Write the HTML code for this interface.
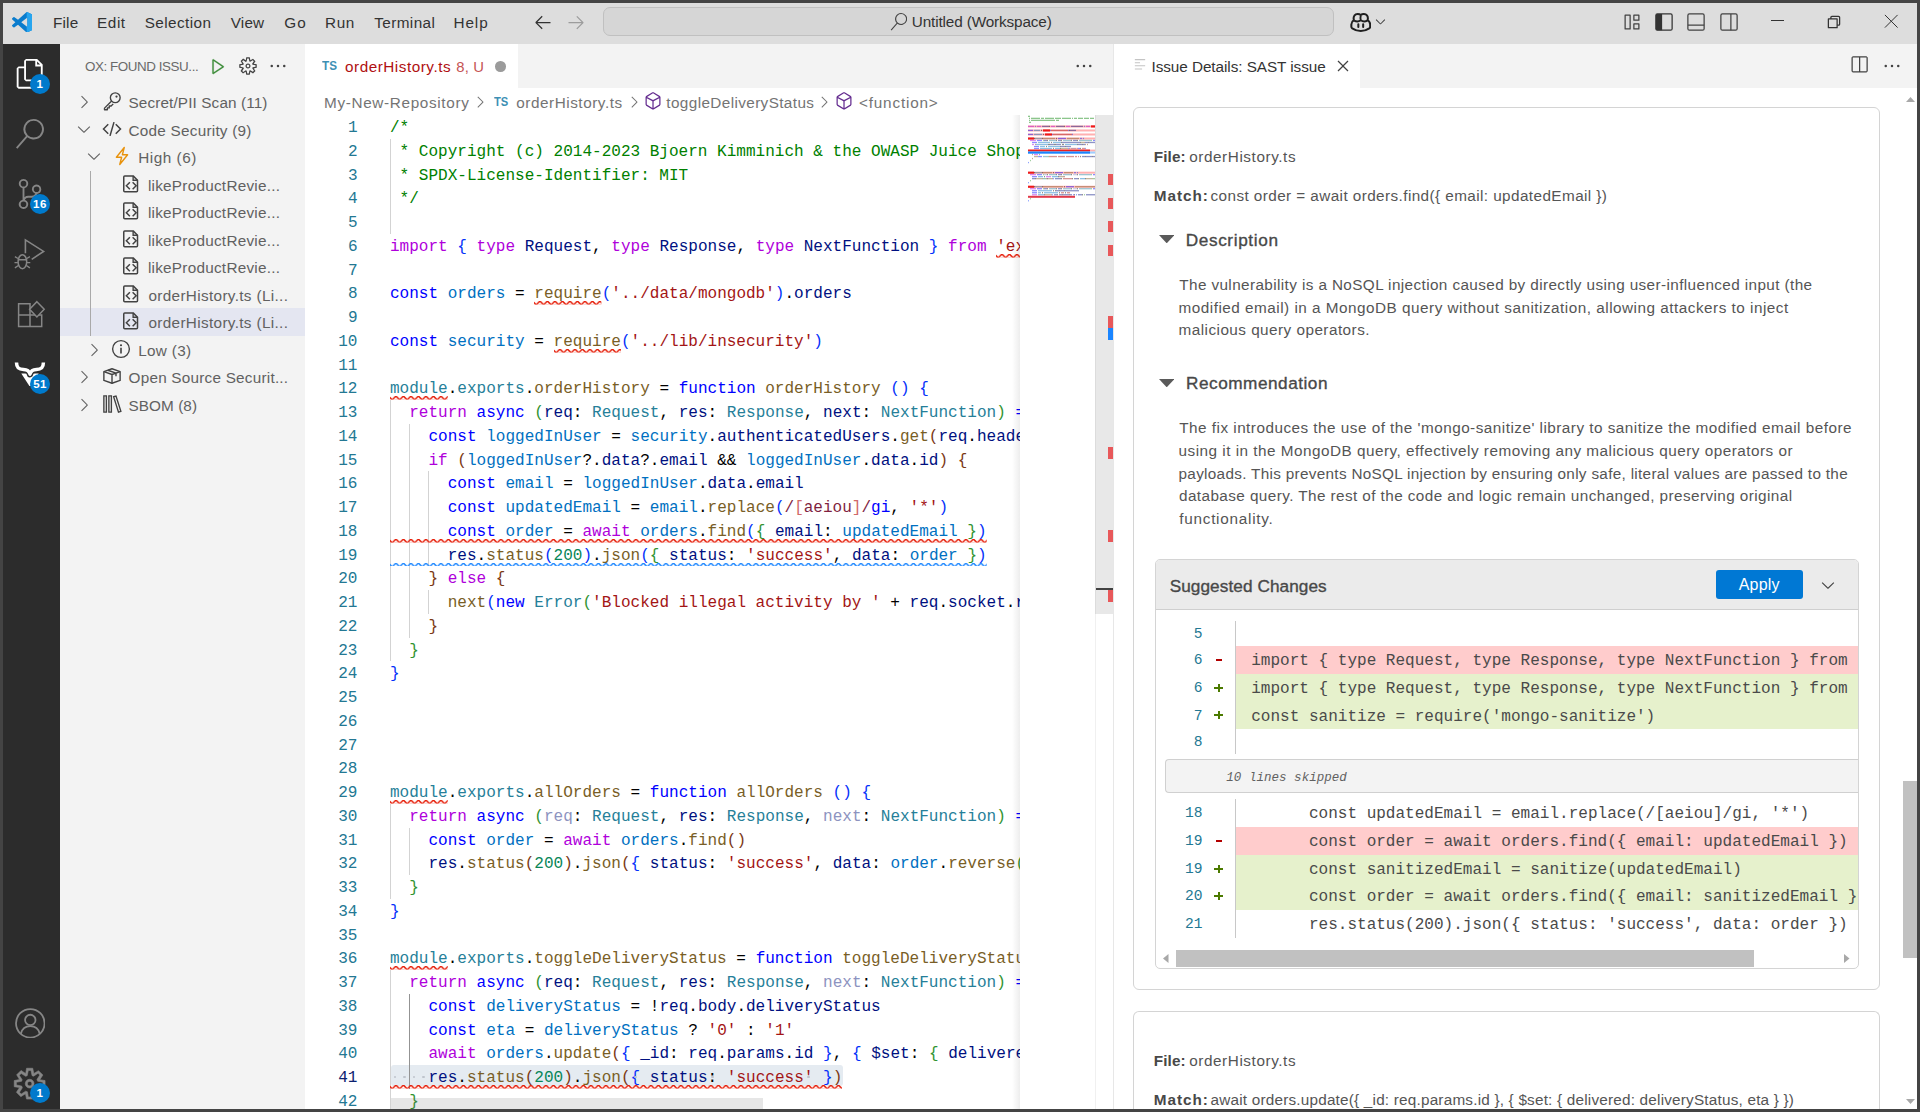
<!DOCTYPE html>
<html><head><meta charset="utf-8"><title>VS Code</title>
<style>
html,body{margin:0;padding:0;overflow:hidden}
html{width:1920px;height:1112px}
body{width:1920px;height:1112px;position:relative;overflow:hidden;background:#fff;font-family:"Liberation Sans",sans-serif}
.a{position:absolute;box-sizing:border-box}
.t{position:absolute;white-space:pre;line-height:1}
.ls{font-family:"Liberation Sans",sans-serif}
.lm{font-family:"Liberation Mono",monospace}
i{font-style:normal}
#code{position:absolute;left:305px;top:115px;width:715px;height:994px;overflow:hidden}
.cl{position:absolute;left:85px;height:23.75px;line-height:23.75px;white-space:pre;font-family:"Liberation Mono",monospace;font-size:16.04px;color:#000}
.cl i{position:relative}
.ln{position:absolute;left:0;width:52.5px;text-align:right;height:23.75px;line-height:23.75px;font-family:"Liberation Mono",monospace;font-size:16.04px;color:#237893}
.dl{position:absolute;white-space:pre;font-family:"Liberation Mono",monospace;font-size:16.04px;color:#3b3b3b;height:27.5px;line-height:27.5px}
.dn{position:absolute;text-align:right;font-family:"Liberation Mono",monospace;font-size:12.6px;color:#237893;height:27.5px;line-height:27.5px}
i.m{color:#008000}i.k{color:#0000ff}i.kc{color:#af00db}i.c{color:#0070c1}i.v{color:#001080}i.f{color:#795e26}i.t{color:#267f99}i.s{color:#a31515}i.n{color:#098658}i.b1{color:#0431fa}i.b2{color:#319331}i.b3{color:#7b3814}i.r{color:#811f3f}i.rc{color:#d16969}i.u{color:#8d93bf}
</style></head>
<body>
<div class="a" style="left:0.00px;top:0.00px;width:1920.00px;height:43.75px;background:#dddddd;"></div>
<svg class="a" style="left:11.70px;top:11.70px;" width="20.50" height="20.50" viewBox="0 0 24 24"><defs><clipPath id="vr"><rect x="17.2" y="0" width="7" height="24"/></clipPath></defs><path d="M23.15 2.587L18.21.21a1.494 1.494 0 0 0-1.705.29l-9.46 8.63-4.12-3.128a.999.999 0 0 0-1.276.057L.327 7.261A1 1 0 0 0 .326 8.74L3.899 12 .326 15.26a1 1 0 0 0 .001 1.479L1.65 17.94a.999.999 0 0 0 1.276.057l4.12-3.128 9.46 8.63a1.492 1.492 0 0 0 1.704.29l4.942-2.377A1.5 1.5 0 0 0 24 20.06V3.939a1.5 1.5 0 0 0-.85-1.352zm-5.146 14.861L10.826 12l7.178-5.448v10.896z" fill="#0a7ccd" /><g clip-path="url(#vr)"><path d="M23.15 2.587L18.21.21a1.494 1.494 0 0 0-1.705.29l-9.46 8.63-4.12-3.128a.999.999 0 0 0-1.276.057L.327 7.261A1 1 0 0 0 .326 8.74L3.899 12 .326 15.26a1 1 0 0 0 .001 1.479L1.65 17.94a.999.999 0 0 0 1.276.057l4.12-3.128 9.46 8.63a1.492 1.492 0 0 0 1.704.29l4.942-2.377A1.5 1.5 0 0 0 24 20.06V3.939a1.5 1.5 0 0 0-.85-1.352zm-5.146 14.861L10.826 12l7.178-5.448v10.896z" fill="#27a5ef" /></g></svg>
<span class="t ls" style="left:52.95px;top:15.15px;font-size:15.30px;color:#333333;letter-spacing:0.183px;">File</span>
<span class="t ls" style="left:97.05px;top:15.15px;font-size:15.30px;color:#333333;letter-spacing:0.567px;">Edit</span>
<span class="t ls" style="left:144.75px;top:15.15px;font-size:15.30px;color:#333333;letter-spacing:0.406px;">Selection</span>
<span class="t ls" style="left:230.80px;top:15.15px;font-size:15.30px;color:#333333;letter-spacing:0.150px;">View</span>
<span class="t ls" style="left:284.25px;top:15.15px;font-size:15.30px;color:#333333;letter-spacing:1.000px;">Go</span>
<span class="t ls" style="left:325.05px;top:15.15px;font-size:15.30px;color:#333333;letter-spacing:0.625px;">Run</span>
<span class="t ls" style="left:374.25px;top:15.15px;font-size:15.30px;color:#333333;letter-spacing:0.400px;">Terminal</span>
<span class="t ls" style="left:453.45px;top:15.15px;font-size:15.30px;color:#333333;letter-spacing:0.933px;">Help</span>
<svg class="a" style="left:533.00px;top:11.70px;" width="20.00" height="20.00" viewBox="0 0 16 16"><path d="M7 3.093l-5 5V8.8l5 5 .707-.707-4.146-4.147H14v-1H3.56L7.708 3.8 7 3.093z" fill="#333333" /></svg>
<svg class="a" style="left:565.50px;top:11.70px;" width="20.00" height="20.00" viewBox="0 0 16 16"><path d="M9 13.887l5-5V8.18l-5-5-.707.707 4.146 4.147H2v1h10.44L8.292 13.18l.707.707z" fill="#9c9c9c" /></svg>
<div class="a" style="left:602.50px;top:7.00px;width:731.50px;height:29.40px;background:#d6d6d6;border:1px solid #c0c0c0;border-radius:7px;"></div>
<svg class="a" style="left:889.50px;top:13.00px;" width="17.50" height="17.50" viewBox="0 0 24 24"><path d="M15.25 0a8.25 8.25 0 0 0-6.18 13.72L1 22.88l1.12 1 8.05-9.12A8.251 8.251 0 1 0 15.25.01V0zm0 15a6.75 6.75 0 1 1 0-13.5 6.75 6.75 0 0 1 0 13.5z" fill="#444444" /></svg>
<span class="t ls" style="left:911.75px;top:14.15px;font-size:15.30px;color:#333333;letter-spacing:-0.129px;">Untitled (Workspace)</span>
<svg class="a" style="left:1349.50px;top:11.50px;" width="21.50" height="21.50" viewBox="0 0 16 16"><path d="M8 2.2c-1.2-.9-3.6-.9-4.6.3-.8 1-.8 2.500-.500 3.600C1.800 6.800 1 7.900 1 9.300v1.700c0 .5.300.900.700 1.200C3.500 13.400 5.700 14.200 8 14.200s4.500-.8 6.300-2c.4-.3.700-.7.700-1.200V9.300c0-1.400-.8-2.500-1.900-3.200.3-1.100.3-2.600-.5-3.600-1-1.200-3.400-1.200-4.600-.3z" fill="none" stroke="#1f1f1f" stroke-width="1.500" stroke-linejoin="round"/><path d="M8 2.600c-.3 1.300-.3 2.700 0 3.600M3.100 6.400c1.500.8 3.700.6 4.900-.2 1.200.8 3.400 1 4.900.2" fill="none" stroke="#1f1f1f" stroke-width="1.400"/><path d="M6.200 9.200v2M9.800 9.200v2" stroke="#1f1f1f" stroke-width="1.500" stroke-linecap="round"/></svg>
<svg class="a" style="left:1373.00px;top:14.00px;" width="15.00" height="15.00" viewBox="0 0 16 16"><path d="M7.976 10.072l4.357-4.357.62.618L8.284 11h-.618L3 6.333l.619-.618 4.357 4.357z" fill="#333333" /></svg>
<svg class="a" style="left:1621.50px;top:12.00px;" width="20.00" height="20.00" viewBox="0 0 16 16"><path d="M2.5 2.5h4v11h-4zM9.5 2.5h4v4h-4zM9.5 9.5h4v4h-4z" fill="none" stroke="#424242" stroke-width="1" stroke-linejoin="round"/></svg>
<svg class="a" style="left:1653.70px;top:12.00px;" width="20.00" height="20.00" viewBox="0 0 16 16"><rect x="1.5" y="1.5" width="13" height="13" rx="1.2" fill="none" stroke="#333333"/><path d="M1.5 2.5a1 1 0 0 1 1-1H6.5v13H2.5a1 1 0 0 1-1-1z" fill="#333333"/></svg>
<svg class="a" style="left:1686.30px;top:12.00px;" width="20.00" height="20.00" viewBox="0 0 16 16"><rect x="1.5" y="1.5" width="13" height="13" rx="1.2" fill="none" stroke="#424242"/><path d="M1.5 10.5h13" fill="none" stroke="#424242" stroke-width="1" /></svg>
<svg class="a" style="left:1718.70px;top:12.00px;" width="20.00" height="20.00" viewBox="0 0 16 16"><rect x="1.5" y="1.5" width="13" height="13" rx="1.2" fill="none" stroke="#424242"/><path d="M9.5 1.5v13" fill="none" stroke="#424242" stroke-width="1" /></svg>
<div class="a" style="left:1771.00px;top:20.00px;width:13.00px;height:1.20px;background:#333333;"></div>
<svg class="a" style="left:1823.50px;top:11.50px;" width="20.00" height="20.00" viewBox="0 0 16 16"><path d="M3.5 5.500h7v7h-7z" fill="none" stroke="#333333" stroke-width="1" stroke-linejoin="round"/><path d="M5.500 5.500v-1.200a.8.8 0 0 1 .8-.8h5.400a.8.8 0 0 1 .8.8v5.400a.8.8 0 0 1-.8.8h-1.200" fill="none" stroke="#333333" stroke-width="1" /></svg>
<svg class="a" style="left:1884.30px;top:14.00px;" width="14.50" height="14.50" viewBox="0 0 16 16"><path d="M1 1l14 14M15 1L1 15" fill="none" stroke="#333333" stroke-width="1.1" /></svg>
<div class="a" style="left:0.00px;top:43.75px;width:60.00px;height:1068.25px;background:#2c2c2c;"></div>
<svg class="a" style="left:15.80px;top:58.90px;" width="27.40" height="29.70" viewBox="1 0 21 24"><path d="M17.5 0h-9L7 1.5V6H2.5L1 7.5v15.07L2.5 24h12.07L16 22.57V18h4.7l1.3-1.43V4.5L17.5 0zm0 2.12l2.38 2.38H17.5V2.12zm-3 20.38h-12v-15H7v9.07L8.5 18h6v4.5zm6-6h-12v-15H16V6h4.5v10.5z" fill="#ffffff" /></svg>
<svg class="a" style="left:16.20px;top:119.00px;" width="28.20" height="29.80" viewBox="1 0 22.7 24"><path d="M15.25 0a8.25 8.25 0 0 0-6.18 13.72L1 22.88l1.12 1 8.05-9.12A8.251 8.251 0 1 0 15.25.01V0zm0 15a6.75 6.75 0 1 1 0-13.5 6.75 6.75 0 0 1 0 13.5z" fill="#868686" /></svg>
<svg class="a" style="left:16.50px;top:179.00px;" width="25.50" height="30.00" viewBox="2.5 0 18.6 24"><path d="M21.007 8.222A3.738 3.738 0 0 0 15.045 5.2a3.737 3.737 0 0 0 1.156 6.583 2.988 2.988 0 0 1-2.668 1.67h-2.99a4.456 4.456 0 0 0-2.989 1.165V7.4a3.737 3.737 0 1 0-1.494 0v9.117a3.776 3.776 0 1 0 1.816.099 2.99 2.99 0 0 1 2.668-1.667h2.99a4.484 4.484 0 0 0 4.223-3.039 3.736 3.736 0 0 0 3.25-3.687zM4.565 3.738a2.242 2.242 0 1 1 4.484 0 2.242 2.242 0 0 1-4.484 0zm4.484 16.441a2.242 2.242 0 1 1-4.484 0 2.242 2.242 0 0 1 4.484 0zm8.221-9.715a2.242 2.242 0 1 1 0-4.485 2.242 2.242 0 0 1 0 4.485z" fill="#868686" /></svg>
<svg class="a" style="left:10.00px;top:235.00px;" width="40.00" height="40.00" viewBox="10 235 40 40"><path d="M25.400 253.200V239.900L43.600 251.400L31.700 259.300" fill="none" stroke="#868686" stroke-width="1.6" stroke-linejoin="miter"/><ellipse cx="22.400" cy="261.700" rx="4.300" ry="7" fill="none" stroke="#868686" stroke-width="1.500"/><path d="M18.300 259.700H26.500M14.900 256.700L18 258.500M14.500 262.600H17.900M14.900 267.800L18.400 265.500M29.900 256.700L26.800 258.500M30.300 262.600H26.900M29.900 267.800L26.400 265.500" fill="none" stroke="#868686" stroke-width="1.4" /></svg>
<svg class="a" style="left:10.00px;top:295.00px;" width="40.00" height="40.00" viewBox="10 295 40 40"><path d="M18.600 303.700h11.400v11.400h-11.400zM18.600 315.100h11.400v11.400h-11.400zM30 315.100h11.700v11.400h-11.700z" fill="none" stroke="#868686" stroke-width="1.5" /><path d="M36.900 301.700l7.300 7.600-7.300 7.600-7.300-7.600z" fill="#2c2c2c" stroke="#868686" stroke-width="1.500"/></svg>
<svg class="a" style="left:10.00px;top:355.00px;" width="40.00" height="40.00" viewBox="10 355 40 40"><path d="M21.300 373.500H38.700L30.600 386H29.400Z" fill="#ffffff"/><path d="M16.500 362.600C16.500 368 19 369.500 23.500 369.500C27.500 369.500 29.200 370.800 30 374.200C30.800 370.800 32.500 369.500 36.500 369.500C41 369.500 43.400 368 43.400 362.600" fill="none" stroke="#2c2c2c" stroke-width="6.4" stroke-linejoin="round"/><path d="M16.500 362.600C16.500 368 19 369.500 23.500 369.500C27.500 369.500 29.200 370.800 30 374.200C30.800 370.800 32.500 369.500 36.500 369.500C41 369.500 43.400 368 43.400 362.600" fill="none" stroke="#ffffff" stroke-width="3.5" stroke-linejoin="round"/></svg>
<svg class="a" style="left:14.80px;top:1007.80px;" width="30.60" height="30.60" viewBox="0 0 24 24"><circle cx="12" cy="12" r="11.2" fill="none" stroke="#868686" stroke-width="1.4"/><circle cx="12" cy="9.4" r="4.1" fill="none" stroke="#868686" stroke-width="1.4"/><path d="M4.6 20.2c.9-3.6 3.8-5.9 7.4-5.9s6.5 2.3 7.4 5.9" fill="none" stroke="#868686" stroke-width="1.4" /></svg>
<svg class="a" style="left:12.00px;top:1065.60px;" width="35.30" height="35.30" viewBox="0 0 16 16"><path d="M9.1 4.4L8.6 2H7.4l-.5 2.4-.7.3-2-1.3-.9.8 1.3 2-.2.7-2.4.5v1.2l2.4.5.3.8-1.3 2 .8.8 2-1.3.8.3.4 2.3h1.2l.5-2.4.8-.3 2 1.3.8-.8-1.3-2 .3-.8 2.3-.4V7.4l-2.4-.5-.3-.8 1.3-2-.8-.8-2 1.3-.7-.2zM9.4 1l.5 2.4L12 2.1l2 2-1.4 2.1 2.4.4v2.8l-2.4.5L14 12l-2 2-2.1-1.4-.5 2.4H6.6l-.5-2.4L4 13.9l-2-2 1.4-2.1L1 9.4V6.6l2.4-.5L2.1 4l2-2 2.1 1.4.4-2.4h2.8zm.6 7c0 1.1-.9 2-2 2s-2-.9-2-2 .9-2 2-2 2 .9 2 2zM8 9c.6 0 1-.4 1-1s-.4-1-1-1-1 .4-1 1 .4 1 1 1z" fill="#868686" stroke="#868686" stroke-width=".25"/></svg>
<div class="a" style="left:30.00px;top:74.00px;width:20.00px;height:20.00px;background:#007acc;border-radius:10px;"></div>
<span class="t ls" style="left:36.40px;top:78.55px;font-size:11.50px;color:#ffffff;font-weight:bold;letter-spacing:0.450px;">1</span>
<div class="a" style="left:29.80px;top:194.00px;width:20.00px;height:20.00px;background:#007acc;border-radius:10px;"></div>
<span class="t ls" style="left:33.10px;top:198.55px;font-size:11.50px;color:#ffffff;font-weight:bold;letter-spacing:0.400px;">16</span>
<div class="a" style="left:29.80px;top:374.00px;width:20.00px;height:20.00px;background:#007acc;border-radius:10px;"></div>
<span class="t ls" style="left:33.35px;top:378.55px;font-size:11.50px;color:#ffffff;font-weight:bold;letter-spacing:0.150px;">51</span>
<div class="a" style="left:30.00px;top:1082.80px;width:20.00px;height:20.00px;background:#007acc;border-radius:10px;"></div>
<span class="t ls" style="left:36.40px;top:1087.55px;font-size:11.50px;color:#ffffff;font-weight:bold;letter-spacing:0.450px;">1</span>
<div class="a" style="left:60.00px;top:43.75px;width:245.00px;height:1068.25px;background:#f3f3f3;"></div>
<span class="t ls" style="left:84.90px;top:60.10px;font-size:13.40px;color:#6a6a6a;letter-spacing:-0.422px;">OX: FOUND ISSU...</span>
<svg class="a" style="left:209.30px;top:57.00px;" width="18.40" height="18.40" viewBox="0 0 16 16"><path d="M3.78 2L3 2.41v12l.78.42 9-6V8l-9-6zM4 13.48V3.35l7.6 5.07L4 13.48z" fill="#388a34" stroke="#388a34" stroke-width=".3"/></svg>
<svg class="a" style="left:237.50px;top:56.00px;" width="20.00" height="20.00" viewBox="0 0 16 16"><path d="M9.1 4.4L8.6 2H7.4l-.5 2.4-.7.3-2-1.3-.9.8 1.3 2-.2.7-2.4.5v1.2l2.4.5.3.8-1.3 2 .8.8 2-1.3.8.3.4 2.3h1.2l.5-2.4.8-.3 2 1.3.8-.8-1.3-2 .3-.8 2.3-.4V7.4l-2.4-.5-.3-.8 1.3-2-.8-.8-2 1.3-.7-.2zM9.4 1l.5 2.4L12 2.1l2 2-1.4 2.1 2.4.4v2.8l-2.4.5L14 12l-2 2-2.1-1.4-.5 2.4H6.6l-.5-2.4L4 13.9l-2-2 1.4-2.1L1 9.4V6.6l2.4-.5L2.1 4l2-2 2.1 1.4.4-2.4h2.8zm.6 7c0 1.1-.9 2-2 2s-2-.9-2-2 .9-2 2-2 2 .9 2 2zM8 9c.6 0 1-.4 1-1s-.4-1-1-1-1 .4-1 1 .4 1 1 1z" fill="#424242" /></svg>
<svg class="a" style="left:267.50px;top:56.00px;" width="20.00" height="20.00" viewBox="0 0 16 16"><path d="M4 8a1 1 0 1 1-2 0 1 1 0 0 1 2 0zm5 0a1 1 0 1 1-2 0 1 1 0 0 1 2 0zm5 0a1 1 0 1 1-2 0 1 1 0 0 1 2 0z" fill="#424242" /></svg>
<div class="a" style="left:60.00px;top:308.00px;width:245.00px;height:27.50px;background:#e4e6f1;"></div>
<div class="a" style="left:90.00px;top:171.00px;width:1.00px;height:164.50px;background:#a9a9a9;"></div>
<svg class="a" style="left:74.30px;top:92.10px;" width="20.00" height="20.00" viewBox="0 0 16 16"><path d="M10.072 8.024L5.715 3.667l.618-.62L11 7.716v.618L6.333 13l-.618-.619 4.357-4.357z" fill="#646464" /></svg>
<svg class="a" style="left:101.50px;top:91.25px;" width="20.00" height="20.00" viewBox="0 0 16 16"><circle cx="10.600" cy="5.400" r="3.900" fill="none" stroke="#424242" stroke-width="1.100"/><circle cx="11.600" cy="4.400" r=".9" fill="#424242"/><path d="M7.700 8L2 13.700v1.300h2.300v-1.500h1.500v-1.500h1.500l1.700-1.700" fill="none" stroke="#424242" stroke-width="1.1" stroke-linejoin="round"/></svg>
<span class="t ls" style="left:128.55px;top:95.15px;font-size:15.30px;color:#616161;letter-spacing:0.121px;">Secret/PII Scan (11)</span>
<svg class="a" style="left:74.00px;top:118.75px;" width="20.00" height="20.00" viewBox="0 0 16 16"><path d="M7.976 10.072l4.357-4.357.62.618L8.284 11h-.618L3 6.333l.619-.618 4.357 4.357z" fill="#646464" /></svg>
<svg class="a" style="left:101.50px;top:118.75px;" width="20.00" height="20.00" viewBox="0 0 16 16"><path d="M5 4.200L1.200 8 5 11.800M11 4.200L14.800 8 11 11.800M9.600 2.500L6.400 13.500" fill="none" stroke="#424242" stroke-width="1.2" /></svg>
<span class="t ls" style="left:128.55px;top:123.15px;font-size:15.30px;color:#616161;letter-spacing:0.241px;">Code Security (9)</span>
<svg class="a" style="left:83.80px;top:146.25px;" width="20.00" height="20.00" viewBox="0 0 16 16"><path d="M7.976 10.072l4.357-4.357.62.618L8.284 11h-.618L3 6.333l.619-.618 4.357 4.357z" fill="#646464" /></svg>
<svg class="a" style="left:111.50px;top:146.25px;" width="20.00" height="20.00" viewBox="0 0 16 16"><path d="M9.800 1.200L3.500 9h4.200l-1.500 5.800L12.500 7H8.300z" fill="none" stroke="#e8920c" stroke-width="1.1" stroke-linejoin="round"/></svg>
<span class="t ls" style="left:138.15px;top:150.15px;font-size:15.30px;color:#616161;letter-spacing:0.536px;">High (6)</span>
<svg class="a" style="left:121.30px;top:173.75px;" width="20.00" height="20.00" viewBox="0 0 16 16"><path d="M3 1.500h6.700l3.500 3.500v8.400a.8.800 0 0 1-.8.800H3a.8.800 0 0 1-.8-.8V2.300a.8.800 0 0 1 .8-.8z" fill="none" stroke="#424242" stroke-width="1.2" stroke-linejoin="round"/><path d="M9.700 1.500v3.500h3.500" fill="none" stroke="#424242" stroke-width="1.1" /><path d="M7.100 6.600L4.300 9.400L7.100 12.200M9.300 6.600L12.100 9.400L9.300 12.200" fill="none" stroke="#424242" stroke-width="1.2" /></svg>
<span class="t ls" style="left:147.90px;top:178.15px;font-size:15.30px;color:#616161;letter-spacing:0.256px;">likeProductRevie...</span>
<svg class="a" style="left:121.30px;top:201.25px;" width="20.00" height="20.00" viewBox="0 0 16 16"><path d="M3 1.500h6.700l3.500 3.500v8.400a.8.800 0 0 1-.8.800H3a.8.800 0 0 1-.8-.8V2.300a.8.800 0 0 1 .8-.8z" fill="none" stroke="#424242" stroke-width="1.2" stroke-linejoin="round"/><path d="M9.700 1.500v3.500h3.500" fill="none" stroke="#424242" stroke-width="1.1" /><path d="M7.100 6.600L4.300 9.400L7.100 12.200M9.300 6.600L12.100 9.400L9.300 12.200" fill="none" stroke="#424242" stroke-width="1.2" /></svg>
<span class="t ls" style="left:147.90px;top:205.15px;font-size:15.30px;color:#616161;letter-spacing:0.256px;">likeProductRevie...</span>
<svg class="a" style="left:121.30px;top:228.75px;" width="20.00" height="20.00" viewBox="0 0 16 16"><path d="M3 1.500h6.700l3.500 3.500v8.400a.8.800 0 0 1-.8.800H3a.8.800 0 0 1-.8-.8V2.300a.8.800 0 0 1 .8-.8z" fill="none" stroke="#424242" stroke-width="1.2" stroke-linejoin="round"/><path d="M9.700 1.500v3.500h3.500" fill="none" stroke="#424242" stroke-width="1.1" /><path d="M7.100 6.600L4.300 9.400L7.100 12.200M9.300 6.600L12.100 9.400L9.300 12.200" fill="none" stroke="#424242" stroke-width="1.2" /></svg>
<span class="t ls" style="left:147.90px;top:233.15px;font-size:15.30px;color:#616161;letter-spacing:0.256px;">likeProductRevie...</span>
<svg class="a" style="left:121.30px;top:256.25px;" width="20.00" height="20.00" viewBox="0 0 16 16"><path d="M3 1.500h6.700l3.500 3.500v8.400a.8.800 0 0 1-.8.800H3a.8.800 0 0 1-.8-.8V2.300a.8.800 0 0 1 .8-.8z" fill="none" stroke="#424242" stroke-width="1.2" stroke-linejoin="round"/><path d="M9.700 1.500v3.500h3.500" fill="none" stroke="#424242" stroke-width="1.1" /><path d="M7.100 6.600L4.300 9.400L7.100 12.200M9.300 6.600L12.100 9.400L9.300 12.200" fill="none" stroke="#424242" stroke-width="1.2" /></svg>
<span class="t ls" style="left:147.90px;top:260.15px;font-size:15.30px;color:#616161;letter-spacing:0.256px;">likeProductRevie...</span>
<svg class="a" style="left:121.30px;top:283.75px;" width="20.00" height="20.00" viewBox="0 0 16 16"><path d="M3 1.500h6.700l3.500 3.500v8.400a.8.800 0 0 1-.8.800H3a.8.800 0 0 1-.8-.8V2.300a.8.800 0 0 1 .8-.8z" fill="none" stroke="#424242" stroke-width="1.2" stroke-linejoin="round"/><path d="M9.700 1.500v3.500h3.500" fill="none" stroke="#424242" stroke-width="1.1" /><path d="M7.100 6.600L4.300 9.400L7.100 12.200M9.300 6.600L12.100 9.400L9.300 12.200" fill="none" stroke="#424242" stroke-width="1.2" /></svg>
<span class="t ls" style="left:148.40px;top:288.15px;font-size:15.30px;color:#616161;letter-spacing:0.343px;">orderHistory.ts (Li...</span>
<svg class="a" style="left:121.30px;top:311.25px;" width="20.00" height="20.00" viewBox="0 0 16 16"><path d="M3 1.500h6.700l3.500 3.500v8.400a.8.800 0 0 1-.8.800H3a.8.800 0 0 1-.8-.8V2.300a.8.800 0 0 1 .8-.8z" fill="none" stroke="#424242" stroke-width="1.2" stroke-linejoin="round"/><path d="M9.700 1.500v3.500h3.500" fill="none" stroke="#424242" stroke-width="1.1" /><path d="M7.100 6.600L4.300 9.400L7.100 12.200M9.300 6.600L12.100 9.400L9.300 12.200" fill="none" stroke="#424242" stroke-width="1.2" /></svg>
<span class="t ls" style="left:148.40px;top:315.15px;font-size:15.30px;color:#616161;letter-spacing:0.343px;">orderHistory.ts (Li...</span>
<svg class="a" style="left:84.30px;top:339.60px;" width="20.00" height="20.00" viewBox="0 0 16 16"><path d="M10.072 8.024L5.715 3.667l.618-.62L11 7.716v.618L6.333 13l-.618-.619 4.357-4.357z" fill="#646464" /></svg>
<svg class="a" style="left:111.30px;top:338.75px;" width="20.00" height="20.00" viewBox="0 0 16 16"><circle cx="8" cy="8" r="6.700" fill="none" stroke="#424242" stroke-width="1.100"/><circle cx="8" cy="5" r=".85" fill="#424242"/><path d="M8 7v4.500" fill="none" stroke="#424242" stroke-width="1.3" /></svg>
<span class="t ls" style="left:138.15px;top:343.15px;font-size:15.30px;color:#616161;letter-spacing:0.342px;">Low (3)</span>
<svg class="a" style="left:74.30px;top:367.10px;" width="20.00" height="20.00" viewBox="0 0 16 16"><path d="M10.072 8.024L5.715 3.667l.618-.62L11 7.716v.618L6.333 13l-.618-.619 4.357-4.357z" fill="#646464" /></svg>
<svg class="a" style="left:101.80px;top:366.25px;" width="20.00" height="20.00" viewBox="0 0 16 16"><path d="M1.500 4.500L8 2.200l6.500 2.300v7L8 13.800l-6.500-2.300z" fill="none" stroke="#424242" stroke-width="1.1" stroke-linejoin="round"/><path d="M1.500 4.500L8 6.800l6.500-2.300M8 6.800v7M4.700 3.400l6.500 2.300v2.500" fill="none" stroke="#424242" stroke-width="1.1" stroke-linejoin="round"/></svg>
<span class="t ls" style="left:128.55px;top:370.15px;font-size:15.30px;color:#616161;letter-spacing:0.229px;">Open Source Securit...</span>
<svg class="a" style="left:74.30px;top:394.60px;" width="20.00" height="20.00" viewBox="0 0 16 16"><path d="M10.072 8.024L5.715 3.667l.618-.62L11 7.716v.618L6.333 13l-.618-.619 4.357-4.357z" fill="#646464" /></svg>
<svg class="a" style="left:101.80px;top:393.75px;" width="20.00" height="20.00" viewBox="0 0 16 16"><path d="M1.500 1.500h2v13h-2zM5.500 1.500h2v13h-2z" fill="none" stroke="#424242" stroke-width="1.1" /><path d="M9.300 2.200l1.900-.6 3.900 12.300-1.900.6z" fill="none" stroke="#424242" stroke-width="1.1" /></svg>
<span class="t ls" style="left:128.55px;top:398.15px;font-size:15.30px;color:#616161;letter-spacing:0.064px;">SBOM (8)</span>
<div class="a" style="left:305.00px;top:43.75px;width:808.50px;height:43.75px;background:#f3f3f3;"></div>
<div class="a" style="left:305.00px;top:43.75px;width:213.00px;height:44.25px;background:#ffffff;"></div>
<span class="t ls" style="left:322.30px;top:59.30px;font-size:13.00px;color:#3d8fb4;font-weight:bold;transform:scaleX(.9);transform-origin:0 0;">TS</span>
<span class="t ls" style="left:345.00px;top:59.15px;font-size:15.30px;color:#b01011;letter-spacing:0.518px;">orderHistory.ts</span>
<span class="t ls" style="left:456.25px;top:59.90px;font-size:14.80px;color:#c55354;letter-spacing:0.183px;">8, U</span>
<div class="a" style="left:495.20px;top:61.00px;width:10.60px;height:10.60px;background:#9b9b9b;border-radius:50%;"></div>
<svg class="a" style="left:1074.00px;top:56.00px;" width="20.00" height="20.00" viewBox="0 0 16 16"><path d="M4 8a1 1 0 1 1-2 0 1 1 0 0 1 2 0zm5 0a1 1 0 1 1-2 0 1 1 0 0 1 2 0zm5 0a1 1 0 1 1-2 0 1 1 0 0 1 2 0z" fill="#424242" /></svg>
<span class="t ls" style="left:324.05px;top:95.15px;font-size:15.30px;color:#747474;letter-spacing:0.656px;">My-New-Repository</span>
<svg class="a" style="left:470.50px;top:92.50px;" width="18.00" height="18.00" viewBox="0 0 16 16"><path d="M10.072 8.024L5.715 3.667l.618-.62L11 7.716v.618L6.333 13l-.618-.619 4.357-4.357z" fill="#747474" /></svg>
<span class="t ls" style="left:494.00px;top:96.00px;font-size:12.60px;color:#3d8fb4;font-weight:bold;transform:scaleX(.89);transform-origin:0 0;">TS</span>
<span class="t ls" style="left:516.20px;top:95.15px;font-size:15.30px;color:#747474;letter-spacing:0.546px;">orderHistory.ts</span>
<svg class="a" style="left:624.50px;top:92.50px;" width="18.00" height="18.00" viewBox="0 0 16 16"><path d="M10.072 8.024L5.715 3.667l.618-.62L11 7.716v.618L6.333 13l-.618-.619 4.357-4.357z" fill="#747474" /></svg>
<svg class="a" style="left:642.50px;top:90.50px;" width="20.00" height="20.00" viewBox="0 0 16 16"><path d="M13.51 4l-5-3h-1l-5 3-.49.86v6l.49.85 5 3h1l5-3 .49-.85v-6L13.51 4zm-6 9.56l-4.5-2.7V5.7l4.5 2.45v5.41zM3.27 4.7l4.74-2.84 4.74 2.84-4.74 2.59L3.27 4.7zm9.74 6.16l-4.5 2.7V8.15l4.5-2.45v5.16z" fill="#652d90" /></svg>
<span class="t ls" style="left:666.35px;top:95.15px;font-size:15.30px;color:#747474;letter-spacing:0.384px;">toggleDeliveryStatus</span>
<svg class="a" style="left:815.30px;top:92.50px;" width="18.00" height="18.00" viewBox="0 0 16 16"><path d="M10.072 8.024L5.715 3.667l.618-.62L11 7.716v.618L6.333 13l-.618-.619 4.357-4.357z" fill="#747474" /></svg>
<svg class="a" style="left:833.80px;top:90.50px;" width="20.00" height="20.00" viewBox="0 0 16 16"><path d="M13.51 4l-5-3h-1l-5 3-.49.86v6l.49.85 5 3h1l5-3 .49-.85v-6L13.51 4zm-6 9.56l-4.5-2.7V5.7l4.5 2.45v5.41zM3.27 4.7l4.74-2.84 4.74 2.84-4.74 2.59L3.27 4.7zm9.74 6.16l-4.5 2.7V8.15l4.5-2.45v5.16z" fill="#652d90" /></svg>
<span class="t ls" style="left:858.95px;top:95.15px;font-size:15.30px;color:#747474;letter-spacing:0.822px;">&lt;function&gt;</span>
<div id="code">
<div class="a" style="left:86.00px;top:950.00px;width:452.38px;height:21.25px;background:#e5ebf1;border-radius:3px"></div>
<div class="a" style="left:85.00px;top:23.75px;width:1px;height:95.00px;background:#d3d3d3"></div>
<div class="a" style="left:85.00px;top:285.00px;width:1px;height:261.25px;background:#d3d3d3"></div>
<div class="a" style="left:104.00px;top:308.75px;width:1px;height:213.75px;background:#d3d3d3"></div>
<div class="a" style="left:123.00px;top:356.25px;width:1px;height:95.00px;background:#d3d3d3"></div>
<div class="a" style="left:123.00px;top:475.00px;width:1px;height:23.75px;background:#d3d3d3"></div>
<div class="a" style="left:85.00px;top:688.75px;width:1px;height:95.00px;background:#d3d3d3"></div>
<div class="a" style="left:104.00px;top:712.50px;width:1px;height:47.50px;background:#d3d3d3"></div>
<div class="a" style="left:85.00px;top:855.00px;width:1px;height:142.50px;background:#d3d3d3"></div>
<div class="a" style="left:104.00px;top:878.75px;width:1px;height:95.00px;background:#939393"></div>
<div class="ln" style="top:2.00px">1</div>
<div class="cl" style="top:2.00px"><i class="m">/*</i></div>
<div class="ln" style="top:25.75px">2</div>
<div class="cl" style="top:25.75px"><i class="m"> * Copyright (c) 2014-2023 Bjoern Kimminich &amp; the OWASP Juice Shop contributors.</i></div>
<div class="ln" style="top:49.50px">3</div>
<div class="cl" style="top:49.50px"><i class="m"> * SPDX-License-Identifier: MIT</i></div>
<div class="ln" style="top:73.25px">4</div>
<div class="cl" style="top:73.25px"><i class="m"> */</i></div>
<div class="ln" style="top:97.00px">5</div>
<div class="ln" style="top:120.75px">6</div>
<div class="cl" style="top:120.75px"><i class="kc">import</i> <i class="b1">{</i> <i class="kc">type</i> <i class="v">Request</i>, <i class="kc">type</i> <i class="v">Response</i>, <i class="kc">type</i> <i class="v">NextFunction</i> <i class="b1">}</i> <i class="kc">from</i> <i class="s">'express'</i></div>
<div class="ln" style="top:144.50px">7</div>
<div class="ln" style="top:168.25px">8</div>
<div class="cl" style="top:168.25px"><i class="k">const</i> <i class="c">orders</i> = <i class="f">require</i><i class="b1">(</i><i class="s">'../data/mongodb'</i><i class="b1">)</i>.<i class="v">orders</i></div>
<div class="ln" style="top:192.00px">9</div>
<div class="ln" style="top:215.75px">10</div>
<div class="cl" style="top:215.75px"><i class="k">const</i> <i class="c">security</i> = <i class="f">require</i><i class="b1">(</i><i class="s">'../lib/insecurity'</i><i class="b1">)</i></div>
<div class="ln" style="top:239.50px">11</div>
<div class="ln" style="top:263.25px">12</div>
<div class="cl" style="top:263.25px"><i class="t">module</i>.<i class="t">exports</i>.<i class="f">orderHistory</i> = <i class="k">function</i> <i class="f">orderHistory</i> <i class="b1">()</i> <i class="b1">{</i></div>
<div class="ln" style="top:287.00px">13</div>
<div class="cl" style="top:287.00px">  <i class="kc">return</i> <i class="k">async</i> <i class="b2">(</i><i class="v">req</i>: <i class="t">Request</i>, <i class="v">res</i>: <i class="t">Response</i>, <i class="v">next</i>: <i class="t">NextFunction</i><i class="b2">)</i> <i class="k">=&gt;</i> <i class="b2">{</i></div>
<div class="ln" style="top:310.75px">14</div>
<div class="cl" style="top:310.75px">    <i class="k">const</i> <i class="c">loggedInUser</i> = <i class="c">security</i>.<i class="v">authenticatedUsers</i>.<i class="f">get</i><i class="b3">(</i><i class="v">req</i>.<i class="v">headers</i>.<i class="v">authorization</i><i class="b3">)</i></div>
<div class="ln" style="top:334.50px">15</div>
<div class="cl" style="top:334.50px">    <i class="kc">if</i> <i class="b3">(</i><i class="c">loggedInUser</i>?.<i class="v">data</i>?.<i class="v">email</i> &amp;&amp; <i class="c">loggedInUser</i>.<i class="v">data</i>.<i class="v">id</i><i class="b3">)</i> <i class="b3">{</i></div>
<div class="ln" style="top:358.25px">16</div>
<div class="cl" style="top:358.25px">      <i class="k">const</i> <i class="c">email</i> = <i class="c">loggedInUser</i>.<i class="v">data</i>.<i class="v">email</i></div>
<div class="ln" style="top:382.00px">17</div>
<div class="cl" style="top:382.00px">      <i class="k">const</i> <i class="c">updatedEmail</i> = <i class="c">email</i>.<i class="f">replace</i><i class="b1">(</i><i class="r">/</i><i class="rc">[</i><i class="r">aeiou</i><i class="rc">]</i><i class="r">/</i><i class="k">gi</i>, <i class="s">'*'</i><i class="b1">)</i></div>
<div class="ln" style="top:405.75px">18</div>
<div class="cl" style="top:405.75px">      <i class="k">const</i> <i class="c">order</i> = <i class="kc">await</i> <i class="c">orders</i>.<i class="f">find</i><i class="b1">(</i><i class="b2">{</i> <i class="v">email</i>: <i class="c">updatedEmail</i> <i class="b2">}</i><i class="b1">)</i></div>
<div class="ln" style="top:429.50px">19</div>
<div class="cl" style="top:429.50px">      <i class="v">res</i>.<i class="f">status</i><i class="b1">(</i><i class="n">200</i><i class="b1">)</i>.<i class="f">json</i><i class="b1">(</i><i class="b2">{</i> <i class="v">status</i>: <i class="s">'success'</i>, <i class="v">data</i>: <i class="c">order</i> <i class="b2">}</i><i class="b1">)</i></div>
<div class="ln" style="top:453.25px">20</div>
<div class="cl" style="top:453.25px">    <i class="b3">}</i> <i class="kc">else</i> <i class="b3">{</i></div>
<div class="ln" style="top:477.00px">21</div>
<div class="cl" style="top:477.00px">      <i class="f">next</i><i class="b1">(</i><i class="k">new</i> <i class="t">Error</i><i class="b2">(</i><i class="s">'Blocked illegal activity by '</i> + <i class="v">req</i>.<i class="v">socket</i>.<i class="v">remoteAddress</i><i class="b2">)</i><i class="b1">)</i></div>
<div class="ln" style="top:500.75px">22</div>
<div class="cl" style="top:500.75px">    <i class="b3">}</i></div>
<div class="ln" style="top:524.50px">23</div>
<div class="cl" style="top:524.50px">  <i class="b2">}</i></div>
<div class="ln" style="top:548.25px">24</div>
<div class="cl" style="top:548.25px"><i class="b1">}</i></div>
<div class="ln" style="top:572.00px">25</div>
<div class="ln" style="top:595.75px">26</div>
<div class="ln" style="top:619.50px">27</div>
<div class="ln" style="top:643.25px">28</div>
<div class="ln" style="top:667.00px">29</div>
<div class="cl" style="top:667.00px"><i class="t">module</i>.<i class="t">exports</i>.<i class="f">allOrders</i> = <i class="k">function</i> <i class="f">allOrders</i> <i class="b1">()</i> <i class="b1">{</i></div>
<div class="ln" style="top:690.75px">30</div>
<div class="cl" style="top:690.75px">  <i class="kc">return</i> <i class="k">async</i> <i class="b2">(</i><i class="u">req</i>: <i class="t">Request</i>, <i class="v">res</i>: <i class="t">Response</i>, <i class="u">next</i>: <i class="t">NextFunction</i><i class="b2">)</i> <i class="k">=&gt;</i> <i class="b2">{</i></div>
<div class="ln" style="top:714.50px">31</div>
<div class="cl" style="top:714.50px">    <i class="k">const</i> <i class="c">order</i> = <i class="kc">await</i> <i class="c">orders</i>.<i class="f">find</i><i class="b3">()</i></div>
<div class="ln" style="top:738.25px">32</div>
<div class="cl" style="top:738.25px">    <i class="v">res</i>.<i class="f">status</i><i class="b3">(</i><i class="n">200</i><i class="b3">)</i>.<i class="f">json</i><i class="b3">(</i><i class="b1">{</i> <i class="v">status</i>: <i class="s">'success'</i>, <i class="v">data</i>: <i class="c">order</i>.<i class="f">reverse</i><i class="b2">()</i> <i class="b1">}</i><i class="b3">)</i></div>
<div class="ln" style="top:762.00px">33</div>
<div class="cl" style="top:762.00px">  <i class="b2">}</i></div>
<div class="ln" style="top:785.75px">34</div>
<div class="cl" style="top:785.75px"><i class="b1">}</i></div>
<div class="ln" style="top:809.50px">35</div>
<div class="ln" style="top:833.25px">36</div>
<div class="cl" style="top:833.25px"><i class="t">module</i>.<i class="t">exports</i>.<i class="f">toggleDeliveryStatus</i> = <i class="k">function</i> <i class="f">toggleDeliveryStatus</i> <i class="b1">()</i> <i class="b1">{</i></div>
<div class="ln" style="top:857.00px">37</div>
<div class="cl" style="top:857.00px">  <i class="kc">return</i> <i class="k">async</i> <i class="b2">(</i><i class="v">req</i>: <i class="t">Request</i>, <i class="v">res</i>: <i class="t">Response</i>, <i class="u">next</i>: <i class="t">NextFunction</i><i class="b2">)</i> <i class="k">=&gt;</i> <i class="b2">{</i></div>
<div class="ln" style="top:880.75px">38</div>
<div class="cl" style="top:880.75px">    <i class="k">const</i> <i class="c">deliveryStatus</i> = !<i class="v">req</i>.<i class="v">body</i>.<i class="v">deliveryStatus</i></div>
<div class="ln" style="top:904.50px">39</div>
<div class="cl" style="top:904.50px">    <i class="k">const</i> <i class="c">eta</i> = <i class="c">deliveryStatus</i> ? <i class="s">'0'</i> : <i class="s">'1'</i></div>
<div class="ln" style="top:928.25px">40</div>
<div class="cl" style="top:928.25px">    <i class="kc">await</i> <i class="c">orders</i>.<i class="f">update</i><i class="b3">(</i><i class="b1">{</i> <i class="v">_id</i>: <i class="v">req</i>.<i class="v">params</i>.<i class="v">id</i> <i class="b1">}</i>, <i class="b1">{</i> <i class="v">$set</i>: <i class="b2">{</i> <i class="v">delivered</i>: <i class="c">deliveryStatus</i>, <i class="v">eta</i> <i class="b2">}</i> <i class="b1">}</i><i class="b3">)</i></div>
<div class="ln" style="top:952.00px;color:#0b216f">41</div>
<div class="cl" style="top:952.00px">    <i class="v">res</i>.<i class="f">status</i><i class="b3">(</i><i class="n">200</i><i class="b3">)</i>.<i class="f">json</i><i class="b3">(</i><i class="b1">{</i> <i class="v">status</i>: <i class="s">'success'</i> <i class="b1">}</i><i class="b3">)</i></div>
<div class="ln" style="top:975.75px">42</div>
<div class="cl" style="top:975.75px">  <i class="b2">}</i></div>
<div class="ln" style="top:999.50px">43</div>
<div class="cl" style="top:999.50px"><i class="b1">}</i></div>
<div class="a" style="left:88.61px;top:961.00px;width:2.4px;height:2.4px;background:#bfc5cd;border-radius:50%"></div>
<div class="a" style="left:98.24px;top:961.00px;width:2.4px;height:2.4px;background:#bfc5cd;border-radius:50%"></div>
<div class="a" style="left:107.86px;top:961.00px;width:2.4px;height:2.4px;background:#bfc5cd;border-radius:50%"></div>
<div class="a" style="left:117.49px;top:961.00px;width:2.4px;height:2.4px;background:#bfc5cd;border-radius:50%"></div>
<div class="a" style="left:329.24px;top:961.00px;width:2.4px;height:2.4px;background:#bfc5cd;border-radius:50%"></div>
<div class="a" style="left:406.24px;top:961.00px;width:2.4px;height:2.4px;background:#bfc5cd;border-radius:50%"></div>
<div class="a" style="left:502.49px;top:961.00px;width:2.4px;height:2.4px;background:#bfc5cd;border-radius:50%"></div>
<svg class="a" style="left:691.38px;top:138.75px" width="115.50" height="3.75"><defs><pattern id="sqe51400" width="7.500" height="3.750" patternUnits="userSpaceOnUse"><g transform="scale(1.250)" fill="#e51400" stroke="#e51400" stroke-width=".18"><polygon points="5.500,0 2.500,3 1.100,3 4.100,0"/><polygon points="4,0 6,2 6,0.600 5.400,0"/><polygon points="0,2 1,3 2.400,3 0,0.600"/></g></pattern></defs><rect width="100%" height="3.750" fill="url(#sqe51400)"/></svg>
<svg class="a" style="left:229.38px;top:186.25px" width="67.38" height="3.75"><defs><pattern id="sqe51400" width="7.500" height="3.750" patternUnits="userSpaceOnUse"><g transform="scale(1.250)" fill="#e51400" stroke="#e51400" stroke-width=".18"><polygon points="5.500,0 2.500,3 1.100,3 4.100,0"/><polygon points="4,0 6,2 6,0.600 5.400,0"/><polygon points="0,2 1,3 2.400,3 0,0.600"/></g></pattern></defs><rect width="100%" height="3.750" fill="url(#sqe51400)"/></svg>
<svg class="a" style="left:248.62px;top:233.75px" width="67.38" height="3.75"><defs><pattern id="sqe51400" width="7.500" height="3.750" patternUnits="userSpaceOnUse"><g transform="scale(1.250)" fill="#e51400" stroke="#e51400" stroke-width=".18"><polygon points="5.500,0 2.500,3 1.100,3 4.100,0"/><polygon points="4,0 6,2 6,0.600 5.400,0"/><polygon points="0,2 1,3 2.400,3 0,0.600"/></g></pattern></defs><rect width="100%" height="3.750" fill="url(#sqe51400)"/></svg>
<svg class="a" style="left:85.00px;top:281.25px" width="57.75" height="3.75"><defs><pattern id="sqe51400" width="7.500" height="3.750" patternUnits="userSpaceOnUse"><g transform="scale(1.250)" fill="#e51400" stroke="#e51400" stroke-width=".18"><polygon points="5.500,0 2.500,3 1.100,3 4.100,0"/><polygon points="4,0 6,2 6,0.600 5.400,0"/><polygon points="0,2 1,3 2.400,3 0,0.600"/></g></pattern></defs><rect width="100%" height="3.750" fill="url(#sqe51400)"/></svg>
<svg class="a" style="left:85.00px;top:685.00px" width="57.75" height="3.75"><defs><pattern id="sqe51400" width="7.500" height="3.750" patternUnits="userSpaceOnUse"><g transform="scale(1.250)" fill="#e51400" stroke="#e51400" stroke-width=".18"><polygon points="5.500,0 2.500,3 1.100,3 4.100,0"/><polygon points="4,0 6,2 6,0.600 5.400,0"/><polygon points="0,2 1,3 2.400,3 0,0.600"/></g></pattern></defs><rect width="100%" height="3.750" fill="url(#sqe51400)"/></svg>
<svg class="a" style="left:85.00px;top:851.25px" width="57.75" height="3.75"><defs><pattern id="sqe51400" width="7.500" height="3.750" patternUnits="userSpaceOnUse"><g transform="scale(1.250)" fill="#e51400" stroke="#e51400" stroke-width=".18"><polygon points="5.500,0 2.500,3 1.100,3 4.100,0"/><polygon points="4,0 6,2 6,0.600 5.400,0"/><polygon points="0,2 1,3 2.400,3 0,0.600"/></g></pattern></defs><rect width="100%" height="3.750" fill="url(#sqe51400)"/></svg>
<svg class="a" style="left:85.00px;top:423.75px" width="596.75" height="3.75"><defs><pattern id="sqe51400" width="7.500" height="3.750" patternUnits="userSpaceOnUse"><g transform="scale(1.250)" fill="#e51400" stroke="#e51400" stroke-width=".18"><polygon points="5.500,0 2.500,3 1.100,3 4.100,0"/><polygon points="4,0 6,2 6,0.600 5.400,0"/><polygon points="0,2 1,3 2.400,3 0,0.600"/></g></pattern></defs><rect width="100%" height="3.750" fill="url(#sqe51400)"/></svg>
<svg class="a" style="left:85.00px;top:447.50px" width="596.75" height="3.20"><defs><pattern id="sq1a85ff" width="7.500" height="3.750" patternUnits="userSpaceOnUse"><g transform="scale(1.250)" fill="#1a85ff" stroke="#1a85ff" stroke-width=".18"><polygon points="5.500,0 2.500,3 1.100,3 4.100,0"/><polygon points="4,0 6,2 6,0.600 5.400,0"/><polygon points="0,2 1,3 2.400,3 0,0.600"/></g></pattern></defs><rect width="100%" height="3.750" fill="url(#sq1a85ff)"/></svg>
<svg class="a" style="left:85.00px;top:970.00px" width="452.38" height="3.75"><defs><pattern id="sqe51400" width="7.500" height="3.750" patternUnits="userSpaceOnUse"><g transform="scale(1.250)" fill="#e51400" stroke="#e51400" stroke-width=".18"><polygon points="5.500,0 2.500,3 1.100,3 4.100,0"/><polygon points="4,0 6,2 6,0.600 5.400,0"/><polygon points="0,2 1,3 2.400,3 0,0.600"/></g></pattern></defs><rect width="100%" height="3.750" fill="url(#sqe51400)"/></svg>
<div class="a" style="left:86.00px;top:983px;width:371.5px;height:12px;background:rgba(100,100,100,.16)"></div>
</div>
<div class="a" style="left:1012.00px;top:115.00px;width:8.00px;height:994.00px;background:linear-gradient(to right,rgba(0,0,0,0),rgba(0,0,0,.07));"></div>
<svg class="a" style="left:0;top:0" width="1920" height="220" viewBox="0 0 1920 220"><rect x="1028.0" y="115.70" width="2.0" height="1.300" fill="#008000" opacity=".45"/><rect x="1029.0" y="117.71" width="1.0" height="1.300" fill="#008000" opacity=".45"/><rect x="1031.0" y="117.71" width="9.0" height="1.300" fill="#008000" opacity=".45"/><rect x="1041.0" y="117.71" width="3.0" height="1.300" fill="#008000" opacity=".45"/><rect x="1045.0" y="117.71" width="9.0" height="1.300" fill="#008000" opacity=".45"/><rect x="1055.0" y="117.71" width="6.0" height="1.300" fill="#008000" opacity=".45"/><rect x="1062.0" y="117.71" width="9.0" height="1.300" fill="#008000" opacity=".45"/><rect x="1072.0" y="117.71" width="1.0" height="1.300" fill="#008000" opacity=".45"/><rect x="1074.0" y="117.71" width="3.0" height="1.300" fill="#008000" opacity=".45"/><rect x="1078.0" y="117.71" width="5.0" height="1.300" fill="#008000" opacity=".45"/><rect x="1084.0" y="117.71" width="5.0" height="1.300" fill="#008000" opacity=".45"/><rect x="1090.0" y="117.71" width="4.0" height="1.300" fill="#008000" opacity=".45"/><rect x="1029.0" y="119.72" width="1.0" height="1.300" fill="#008000" opacity=".45"/><rect x="1031.0" y="119.72" width="24.0" height="1.300" fill="#008000" opacity=".45"/><rect x="1056.0" y="119.72" width="3.0" height="1.300" fill="#008000" opacity=".45"/><rect x="1029.0" y="121.73" width="2.0" height="1.300" fill="#008000" opacity=".45"/><rect x="1028.0" y="125.45" width="67" height="2" fill="#ffb0b0"/><rect x="1028.0" y="125.75" width="6.0" height="1.300" fill="#af00db" opacity=".45"/><rect x="1035.0" y="125.75" width="1.0" height="1.300" fill="#0431fa" opacity=".45"/><rect x="1037.0" y="125.75" width="4.0" height="1.300" fill="#af00db" opacity=".45"/><rect x="1042.0" y="125.75" width="7.0" height="1.300" fill="#001080" opacity=".45"/><rect x="1049.0" y="125.75" width="1.0" height="1.300" fill="#000000" opacity=".45"/><rect x="1051.0" y="125.75" width="4.0" height="1.300" fill="#af00db" opacity=".45"/><rect x="1056.0" y="125.75" width="8.0" height="1.300" fill="#001080" opacity=".45"/><rect x="1064.0" y="125.75" width="1.0" height="1.300" fill="#000000" opacity=".45"/><rect x="1066.0" y="125.75" width="4.0" height="1.300" fill="#af00db" opacity=".45"/><rect x="1071.0" y="125.75" width="12.0" height="1.300" fill="#001080" opacity=".45"/><rect x="1084.0" y="125.75" width="1.0" height="1.300" fill="#0431fa" opacity=".45"/><rect x="1086.0" y="125.75" width="4.0" height="1.300" fill="#af00db" opacity=".45"/><rect x="1091.0" y="125.75" width="4.0" height="1.300" fill="#a31515" opacity=".45"/><rect x="1028.0" y="129.47" width="67" height="2" fill="#ffb0b0"/><rect x="1028.0" y="129.77" width="5.0" height="1.300" fill="#0000ff" opacity=".45"/><rect x="1034.0" y="129.77" width="6.0" height="1.300" fill="#0070c1" opacity=".45"/><rect x="1041.0" y="129.77" width="1.0" height="1.300" fill="#000000" opacity=".45"/><rect x="1043.0" y="129.77" width="7.0" height="1.300" fill="#795e26" opacity=".45"/><rect x="1050.0" y="129.77" width="1.0" height="1.300" fill="#0431fa" opacity=".45"/><rect x="1051.0" y="129.77" width="17.0" height="1.300" fill="#a31515" opacity=".45"/><rect x="1068.0" y="129.77" width="1.0" height="1.300" fill="#0431fa" opacity=".45"/><rect x="1069.0" y="129.77" width="1.0" height="1.300" fill="#000000" opacity=".45"/><rect x="1070.0" y="129.77" width="6.0" height="1.300" fill="#001080" opacity=".45"/><rect x="1028.0" y="133.49" width="67" height="2" fill="#ffb0b0"/><rect x="1028.0" y="133.79" width="5.0" height="1.300" fill="#0000ff" opacity=".45"/><rect x="1034.0" y="133.79" width="8.0" height="1.300" fill="#0070c1" opacity=".45"/><rect x="1043.0" y="133.79" width="1.0" height="1.300" fill="#000000" opacity=".45"/><rect x="1045.0" y="133.79" width="7.0" height="1.300" fill="#795e26" opacity=".45"/><rect x="1052.0" y="133.79" width="1.0" height="1.300" fill="#0431fa" opacity=".45"/><rect x="1053.0" y="133.79" width="19.0" height="1.300" fill="#a31515" opacity=".45"/><rect x="1072.0" y="133.79" width="1.0" height="1.300" fill="#0431fa" opacity=".45"/><rect x="1028.0" y="137.51" width="67" height="2" fill="#ffb0b0"/><rect x="1028.0" y="137.81" width="6.0" height="1.300" fill="#267f99" opacity=".45"/><rect x="1034.0" y="137.81" width="1.0" height="1.300" fill="#000000" opacity=".45"/><rect x="1035.0" y="137.81" width="7.0" height="1.300" fill="#267f99" opacity=".45"/><rect x="1042.0" y="137.81" width="1.0" height="1.300" fill="#000000" opacity=".45"/><rect x="1043.0" y="137.81" width="12.0" height="1.300" fill="#795e26" opacity=".45"/><rect x="1056.0" y="137.81" width="1.0" height="1.300" fill="#000000" opacity=".45"/><rect x="1058.0" y="137.81" width="8.0" height="1.300" fill="#0000ff" opacity=".45"/><rect x="1067.0" y="137.81" width="12.0" height="1.300" fill="#795e26" opacity=".45"/><rect x="1080.0" y="137.81" width="2.0" height="1.300" fill="#0431fa" opacity=".45"/><rect x="1083.0" y="137.81" width="1.0" height="1.300" fill="#0431fa" opacity=".45"/><rect x="1030.0" y="139.82" width="6.0" height="1.300" fill="#af00db" opacity=".45"/><rect x="1037.0" y="139.82" width="5.0" height="1.300" fill="#0000ff" opacity=".45"/><rect x="1043.0" y="139.82" width="1.0" height="1.300" fill="#319331" opacity=".45"/><rect x="1044.0" y="139.82" width="3.0" height="1.300" fill="#001080" opacity=".45"/><rect x="1047.0" y="139.82" width="1.0" height="1.300" fill="#000000" opacity=".45"/><rect x="1049.0" y="139.82" width="7.0" height="1.300" fill="#267f99" opacity=".45"/><rect x="1056.0" y="139.82" width="1.0" height="1.300" fill="#000000" opacity=".45"/><rect x="1058.0" y="139.82" width="3.0" height="1.300" fill="#001080" opacity=".45"/><rect x="1061.0" y="139.82" width="1.0" height="1.300" fill="#000000" opacity=".45"/><rect x="1063.0" y="139.82" width="8.0" height="1.300" fill="#267f99" opacity=".45"/><rect x="1071.0" y="139.82" width="1.0" height="1.300" fill="#000000" opacity=".45"/><rect x="1073.0" y="139.82" width="4.0" height="1.300" fill="#001080" opacity=".45"/><rect x="1077.0" y="139.82" width="1.0" height="1.300" fill="#000000" opacity=".45"/><rect x="1079.0" y="139.82" width="12.0" height="1.300" fill="#267f99" opacity=".45"/><rect x="1091.0" y="139.82" width="1.0" height="1.300" fill="#319331" opacity=".45"/><rect x="1093.0" y="139.82" width="2.0" height="1.300" fill="#0000ff" opacity=".45"/><rect x="1032.0" y="141.83" width="5.0" height="1.300" fill="#0000ff" opacity=".45"/><rect x="1038.0" y="141.83" width="12.0" height="1.300" fill="#0070c1" opacity=".45"/><rect x="1051.0" y="141.83" width="1.0" height="1.300" fill="#000000" opacity=".45"/><rect x="1053.0" y="141.83" width="8.0" height="1.300" fill="#0070c1" opacity=".45"/><rect x="1061.0" y="141.83" width="1.0" height="1.300" fill="#000000" opacity=".45"/><rect x="1062.0" y="141.83" width="18.0" height="1.300" fill="#001080" opacity=".45"/><rect x="1080.0" y="141.83" width="1.0" height="1.300" fill="#000000" opacity=".45"/><rect x="1081.0" y="141.83" width="3.0" height="1.300" fill="#795e26" opacity=".45"/><rect x="1084.0" y="141.83" width="1.0" height="1.300" fill="#7b3814" opacity=".45"/><rect x="1085.0" y="141.83" width="3.0" height="1.300" fill="#001080" opacity=".45"/><rect x="1088.0" y="141.83" width="1.0" height="1.300" fill="#000000" opacity=".45"/><rect x="1089.0" y="141.83" width="6.0" height="1.300" fill="#001080" opacity=".45"/><rect x="1032.0" y="143.84" width="2.0" height="1.300" fill="#af00db" opacity=".45"/><rect x="1035.0" y="143.84" width="1.0" height="1.300" fill="#7b3814" opacity=".45"/><rect x="1036.0" y="143.84" width="12.0" height="1.300" fill="#0070c1" opacity=".45"/><rect x="1048.0" y="143.84" width="2.0" height="1.300" fill="#000000" opacity=".45"/><rect x="1050.0" y="143.84" width="4.0" height="1.300" fill="#001080" opacity=".45"/><rect x="1054.0" y="143.84" width="2.0" height="1.300" fill="#000000" opacity=".45"/><rect x="1056.0" y="143.84" width="5.0" height="1.300" fill="#001080" opacity=".45"/><rect x="1062.0" y="143.84" width="2.0" height="1.300" fill="#000000" opacity=".45"/><rect x="1065.0" y="143.84" width="12.0" height="1.300" fill="#0070c1" opacity=".45"/><rect x="1077.0" y="143.84" width="1.0" height="1.300" fill="#000000" opacity=".45"/><rect x="1078.0" y="143.84" width="4.0" height="1.300" fill="#001080" opacity=".45"/><rect x="1082.0" y="143.84" width="1.0" height="1.300" fill="#000000" opacity=".45"/><rect x="1083.0" y="143.84" width="2.0" height="1.300" fill="#001080" opacity=".45"/><rect x="1085.0" y="143.84" width="1.0" height="1.300" fill="#7b3814" opacity=".45"/><rect x="1087.0" y="143.84" width="1.0" height="1.300" fill="#7b3814" opacity=".45"/><rect x="1034.0" y="145.85" width="5.0" height="1.300" fill="#0000ff" opacity=".45"/><rect x="1040.0" y="145.85" width="5.0" height="1.300" fill="#0070c1" opacity=".45"/><rect x="1046.0" y="145.85" width="1.0" height="1.300" fill="#000000" opacity=".45"/><rect x="1048.0" y="145.85" width="12.0" height="1.300" fill="#0070c1" opacity=".45"/><rect x="1060.0" y="145.85" width="1.0" height="1.300" fill="#000000" opacity=".45"/><rect x="1061.0" y="145.85" width="4.0" height="1.300" fill="#001080" opacity=".45"/><rect x="1065.0" y="145.85" width="1.0" height="1.300" fill="#000000" opacity=".45"/><rect x="1066.0" y="145.85" width="5.0" height="1.300" fill="#001080" opacity=".45"/><rect x="1034.0" y="147.86" width="5.0" height="1.300" fill="#0000ff" opacity=".45"/><rect x="1040.0" y="147.86" width="12.0" height="1.300" fill="#0070c1" opacity=".45"/><rect x="1053.0" y="147.86" width="1.0" height="1.300" fill="#000000" opacity=".45"/><rect x="1055.0" y="147.86" width="5.0" height="1.300" fill="#0070c1" opacity=".45"/><rect x="1060.0" y="147.86" width="1.0" height="1.300" fill="#000000" opacity=".45"/><rect x="1061.0" y="147.86" width="7.0" height="1.300" fill="#795e26" opacity=".45"/><rect x="1068.0" y="147.86" width="1.0" height="1.300" fill="#0431fa" opacity=".45"/><rect x="1069.0" y="147.86" width="1.0" height="1.300" fill="#811f3f" opacity=".45"/><rect x="1070.0" y="147.86" width="1.0" height="1.300" fill="#d16969" opacity=".45"/><rect x="1071.0" y="147.86" width="5.0" height="1.300" fill="#811f3f" opacity=".45"/><rect x="1076.0" y="147.86" width="1.0" height="1.300" fill="#d16969" opacity=".45"/><rect x="1077.0" y="147.86" width="1.0" height="1.300" fill="#811f3f" opacity=".45"/><rect x="1078.0" y="147.86" width="2.0" height="1.300" fill="#0000ff" opacity=".45"/><rect x="1080.0" y="147.86" width="1.0" height="1.300" fill="#000000" opacity=".45"/><rect x="1082.0" y="147.86" width="3.0" height="1.300" fill="#a31515" opacity=".45"/><rect x="1085.0" y="147.86" width="1.0" height="1.300" fill="#0431fa" opacity=".45"/><rect x="1028.0" y="149.57" width="67" height="2" fill="#ffb0b0"/><rect x="1028.0" y="149.57" width="62" height="2" fill="#ee2020"/><rect x="1028.0" y="151.58" width="67" height="2" fill="#9fcfff"/><rect x="1028.0" y="151.58" width="62" height="2" fill="#1a85ff"/><rect x="1032.0" y="153.89" width="1.0" height="1.300" fill="#7b3814" opacity=".45"/><rect x="1034.0" y="153.89" width="4.0" height="1.300" fill="#af00db" opacity=".45"/><rect x="1039.0" y="153.89" width="1.0" height="1.300" fill="#7b3814" opacity=".45"/><rect x="1034.0" y="155.90" width="4.0" height="1.300" fill="#795e26" opacity=".45"/><rect x="1038.0" y="155.90" width="1.0" height="1.300" fill="#0431fa" opacity=".45"/><rect x="1039.0" y="155.90" width="3.0" height="1.300" fill="#0000ff" opacity=".45"/><rect x="1043.0" y="155.90" width="5.0" height="1.300" fill="#267f99" opacity=".45"/><rect x="1048.0" y="155.90" width="1.0" height="1.300" fill="#319331" opacity=".45"/><rect x="1049.0" y="155.90" width="8.0" height="1.300" fill="#a31515" opacity=".45"/><rect x="1058.0" y="155.90" width="7.0" height="1.300" fill="#a31515" opacity=".45"/><rect x="1066.0" y="155.90" width="8.0" height="1.300" fill="#a31515" opacity=".45"/><rect x="1075.0" y="155.90" width="2.0" height="1.300" fill="#a31515" opacity=".45"/><rect x="1078.0" y="155.90" width="1.0" height="1.300" fill="#a31515" opacity=".45"/><rect x="1080.0" y="155.90" width="1.0" height="1.300" fill="#000000" opacity=".45"/><rect x="1082.0" y="155.90" width="3.0" height="1.300" fill="#001080" opacity=".45"/><rect x="1085.0" y="155.90" width="1.0" height="1.300" fill="#000000" opacity=".45"/><rect x="1086.0" y="155.90" width="6.0" height="1.300" fill="#001080" opacity=".45"/><rect x="1092.0" y="155.90" width="1.0" height="1.300" fill="#000000" opacity=".45"/><rect x="1093.0" y="155.90" width="2.0" height="1.300" fill="#001080" opacity=".45"/><rect x="1032.0" y="157.91" width="1.0" height="1.300" fill="#7b3814" opacity=".45"/><rect x="1030.0" y="159.92" width="1.0" height="1.300" fill="#319331" opacity=".45"/><rect x="1028.0" y="161.93" width="1.0" height="1.300" fill="#0431fa" opacity=".45"/><rect x="1028.0" y="171.68" width="67" height="2" fill="#ffb0b0"/><rect x="1028.0" y="171.98" width="6.0" height="1.300" fill="#267f99" opacity=".45"/><rect x="1034.0" y="171.98" width="1.0" height="1.300" fill="#000000" opacity=".45"/><rect x="1035.0" y="171.98" width="7.0" height="1.300" fill="#267f99" opacity=".45"/><rect x="1042.0" y="171.98" width="1.0" height="1.300" fill="#000000" opacity=".45"/><rect x="1043.0" y="171.98" width="9.0" height="1.300" fill="#795e26" opacity=".45"/><rect x="1053.0" y="171.98" width="1.0" height="1.300" fill="#000000" opacity=".45"/><rect x="1055.0" y="171.98" width="8.0" height="1.300" fill="#0000ff" opacity=".45"/><rect x="1064.0" y="171.98" width="9.0" height="1.300" fill="#795e26" opacity=".45"/><rect x="1074.0" y="171.98" width="2.0" height="1.300" fill="#0431fa" opacity=".45"/><rect x="1077.0" y="171.98" width="1.0" height="1.300" fill="#0431fa" opacity=".45"/><rect x="1030.0" y="173.99" width="6.0" height="1.300" fill="#af00db" opacity=".45"/><rect x="1037.0" y="173.99" width="5.0" height="1.300" fill="#0000ff" opacity=".45"/><rect x="1043.0" y="173.99" width="1.0" height="1.300" fill="#319331" opacity=".45"/><rect x="1044.0" y="173.99" width="3.0" height="1.300" fill="#8d93bf" opacity=".45"/><rect x="1047.0" y="173.99" width="1.0" height="1.300" fill="#000000" opacity=".45"/><rect x="1049.0" y="173.99" width="7.0" height="1.300" fill="#267f99" opacity=".45"/><rect x="1056.0" y="173.99" width="1.0" height="1.300" fill="#000000" opacity=".45"/><rect x="1058.0" y="173.99" width="3.0" height="1.300" fill="#001080" opacity=".45"/><rect x="1061.0" y="173.99" width="1.0" height="1.300" fill="#000000" opacity=".45"/><rect x="1063.0" y="173.99" width="8.0" height="1.300" fill="#267f99" opacity=".45"/><rect x="1071.0" y="173.99" width="1.0" height="1.300" fill="#000000" opacity=".45"/><rect x="1073.0" y="173.99" width="4.0" height="1.300" fill="#8d93bf" opacity=".45"/><rect x="1077.0" y="173.99" width="1.0" height="1.300" fill="#000000" opacity=".45"/><rect x="1079.0" y="173.99" width="12.0" height="1.300" fill="#267f99" opacity=".45"/><rect x="1091.0" y="173.99" width="1.0" height="1.300" fill="#319331" opacity=".45"/><rect x="1093.0" y="173.99" width="2.0" height="1.300" fill="#0000ff" opacity=".45"/><rect x="1032.0" y="176.00" width="5.0" height="1.300" fill="#0000ff" opacity=".45"/><rect x="1038.0" y="176.00" width="5.0" height="1.300" fill="#0070c1" opacity=".45"/><rect x="1044.0" y="176.00" width="1.0" height="1.300" fill="#000000" opacity=".45"/><rect x="1046.0" y="176.00" width="5.0" height="1.300" fill="#af00db" opacity=".45"/><rect x="1052.0" y="176.00" width="6.0" height="1.300" fill="#0070c1" opacity=".45"/><rect x="1058.0" y="176.00" width="1.0" height="1.300" fill="#000000" opacity=".45"/><rect x="1059.0" y="176.00" width="4.0" height="1.300" fill="#795e26" opacity=".45"/><rect x="1063.0" y="176.00" width="2.0" height="1.300" fill="#7b3814" opacity=".45"/><rect x="1032.0" y="178.01" width="3.0" height="1.300" fill="#001080" opacity=".45"/><rect x="1035.0" y="178.01" width="1.0" height="1.300" fill="#000000" opacity=".45"/><rect x="1036.0" y="178.01" width="6.0" height="1.300" fill="#795e26" opacity=".45"/><rect x="1042.0" y="178.01" width="1.0" height="1.300" fill="#7b3814" opacity=".45"/><rect x="1043.0" y="178.01" width="3.0" height="1.300" fill="#098658" opacity=".45"/><rect x="1046.0" y="178.01" width="1.0" height="1.300" fill="#7b3814" opacity=".45"/><rect x="1047.0" y="178.01" width="1.0" height="1.300" fill="#000000" opacity=".45"/><rect x="1048.0" y="178.01" width="4.0" height="1.300" fill="#795e26" opacity=".45"/><rect x="1052.0" y="178.01" width="1.0" height="1.300" fill="#7b3814" opacity=".45"/><rect x="1053.0" y="178.01" width="1.0" height="1.300" fill="#0431fa" opacity=".45"/><rect x="1055.0" y="178.01" width="6.0" height="1.300" fill="#001080" opacity=".45"/><rect x="1061.0" y="178.01" width="1.0" height="1.300" fill="#000000" opacity=".45"/><rect x="1063.0" y="178.01" width="9.0" height="1.300" fill="#a31515" opacity=".45"/><rect x="1072.0" y="178.01" width="1.0" height="1.300" fill="#000000" opacity=".45"/><rect x="1074.0" y="178.01" width="4.0" height="1.300" fill="#001080" opacity=".45"/><rect x="1078.0" y="178.01" width="1.0" height="1.300" fill="#000000" opacity=".45"/><rect x="1080.0" y="178.01" width="5.0" height="1.300" fill="#0070c1" opacity=".45"/><rect x="1085.0" y="178.01" width="1.0" height="1.300" fill="#000000" opacity=".45"/><rect x="1086.0" y="178.01" width="7.0" height="1.300" fill="#795e26" opacity=".45"/><rect x="1093.0" y="178.01" width="2.0" height="1.300" fill="#319331" opacity=".45"/><rect x="1030.0" y="180.02" width="1.0" height="1.300" fill="#319331" opacity=".45"/><rect x="1028.0" y="182.03" width="1.0" height="1.300" fill="#0431fa" opacity=".45"/><rect x="1028.0" y="185.75" width="67" height="2" fill="#ffb0b0"/><rect x="1028.0" y="186.05" width="6.0" height="1.300" fill="#267f99" opacity=".45"/><rect x="1034.0" y="186.05" width="1.0" height="1.300" fill="#000000" opacity=".45"/><rect x="1035.0" y="186.05" width="7.0" height="1.300" fill="#267f99" opacity=".45"/><rect x="1042.0" y="186.05" width="1.0" height="1.300" fill="#000000" opacity=".45"/><rect x="1043.0" y="186.05" width="20.0" height="1.300" fill="#795e26" opacity=".45"/><rect x="1064.0" y="186.05" width="1.0" height="1.300" fill="#000000" opacity=".45"/><rect x="1066.0" y="186.05" width="8.0" height="1.300" fill="#0000ff" opacity=".45"/><rect x="1075.0" y="186.05" width="20.0" height="1.300" fill="#795e26" opacity=".45"/><rect x="1030.0" y="188.06" width="6.0" height="1.300" fill="#af00db" opacity=".45"/><rect x="1037.0" y="188.06" width="5.0" height="1.300" fill="#0000ff" opacity=".45"/><rect x="1043.0" y="188.06" width="1.0" height="1.300" fill="#319331" opacity=".45"/><rect x="1044.0" y="188.06" width="3.0" height="1.300" fill="#001080" opacity=".45"/><rect x="1047.0" y="188.06" width="1.0" height="1.300" fill="#000000" opacity=".45"/><rect x="1049.0" y="188.06" width="7.0" height="1.300" fill="#267f99" opacity=".45"/><rect x="1056.0" y="188.06" width="1.0" height="1.300" fill="#000000" opacity=".45"/><rect x="1058.0" y="188.06" width="3.0" height="1.300" fill="#001080" opacity=".45"/><rect x="1061.0" y="188.06" width="1.0" height="1.300" fill="#000000" opacity=".45"/><rect x="1063.0" y="188.06" width="8.0" height="1.300" fill="#267f99" opacity=".45"/><rect x="1071.0" y="188.06" width="1.0" height="1.300" fill="#000000" opacity=".45"/><rect x="1073.0" y="188.06" width="4.0" height="1.300" fill="#8d93bf" opacity=".45"/><rect x="1077.0" y="188.06" width="1.0" height="1.300" fill="#000000" opacity=".45"/><rect x="1079.0" y="188.06" width="12.0" height="1.300" fill="#267f99" opacity=".45"/><rect x="1091.0" y="188.06" width="1.0" height="1.300" fill="#319331" opacity=".45"/><rect x="1093.0" y="188.06" width="2.0" height="1.300" fill="#0000ff" opacity=".45"/><rect x="1032.0" y="190.07" width="5.0" height="1.300" fill="#0000ff" opacity=".45"/><rect x="1038.0" y="190.07" width="14.0" height="1.300" fill="#0070c1" opacity=".45"/><rect x="1053.0" y="190.07" width="1.0" height="1.300" fill="#000000" opacity=".45"/><rect x="1055.0" y="190.07" width="1.0" height="1.300" fill="#000000" opacity=".45"/><rect x="1056.0" y="190.07" width="3.0" height="1.300" fill="#001080" opacity=".45"/><rect x="1059.0" y="190.07" width="1.0" height="1.300" fill="#000000" opacity=".45"/><rect x="1060.0" y="190.07" width="4.0" height="1.300" fill="#001080" opacity=".45"/><rect x="1064.0" y="190.07" width="1.0" height="1.300" fill="#000000" opacity=".45"/><rect x="1065.0" y="190.07" width="14.0" height="1.300" fill="#001080" opacity=".45"/><rect x="1032.0" y="192.08" width="5.0" height="1.300" fill="#0000ff" opacity=".45"/><rect x="1038.0" y="192.08" width="3.0" height="1.300" fill="#0070c1" opacity=".45"/><rect x="1042.0" y="192.08" width="1.0" height="1.300" fill="#000000" opacity=".45"/><rect x="1044.0" y="192.08" width="14.0" height="1.300" fill="#0070c1" opacity=".45"/><rect x="1059.0" y="192.08" width="1.0" height="1.300" fill="#000000" opacity=".45"/><rect x="1061.0" y="192.08" width="3.0" height="1.300" fill="#a31515" opacity=".45"/><rect x="1065.0" y="192.08" width="1.0" height="1.300" fill="#000000" opacity=".45"/><rect x="1067.0" y="192.08" width="3.0" height="1.300" fill="#a31515" opacity=".45"/><rect x="1032.0" y="194.09" width="5.0" height="1.300" fill="#af00db" opacity=".45"/><rect x="1038.0" y="194.09" width="6.0" height="1.300" fill="#0070c1" opacity=".45"/><rect x="1044.0" y="194.09" width="1.0" height="1.300" fill="#000000" opacity=".45"/><rect x="1045.0" y="194.09" width="6.0" height="1.300" fill="#795e26" opacity=".45"/><rect x="1051.0" y="194.09" width="1.0" height="1.300" fill="#7b3814" opacity=".45"/><rect x="1052.0" y="194.09" width="1.0" height="1.300" fill="#0431fa" opacity=".45"/><rect x="1054.0" y="194.09" width="3.0" height="1.300" fill="#001080" opacity=".45"/><rect x="1057.0" y="194.09" width="1.0" height="1.300" fill="#000000" opacity=".45"/><rect x="1059.0" y="194.09" width="3.0" height="1.300" fill="#001080" opacity=".45"/><rect x="1062.0" y="194.09" width="1.0" height="1.300" fill="#000000" opacity=".45"/><rect x="1063.0" y="194.09" width="6.0" height="1.300" fill="#001080" opacity=".45"/><rect x="1069.0" y="194.09" width="1.0" height="1.300" fill="#000000" opacity=".45"/><rect x="1070.0" y="194.09" width="2.0" height="1.300" fill="#001080" opacity=".45"/><rect x="1073.0" y="194.09" width="1.0" height="1.300" fill="#0431fa" opacity=".45"/><rect x="1074.0" y="194.09" width="1.0" height="1.300" fill="#000000" opacity=".45"/><rect x="1076.0" y="194.09" width="1.0" height="1.300" fill="#0431fa" opacity=".45"/><rect x="1078.0" y="194.09" width="4.0" height="1.300" fill="#001080" opacity=".45"/><rect x="1082.0" y="194.09" width="1.0" height="1.300" fill="#000000" opacity=".45"/><rect x="1084.0" y="194.09" width="1.0" height="1.300" fill="#319331" opacity=".45"/><rect x="1086.0" y="194.09" width="9.0" height="1.300" fill="#001080" opacity=".45"/><rect x="1028.0" y="195.80" width="47" height="2" fill="#e23a4a"/><rect x="1030.0" y="198.11" width="1.0" height="1.300" fill="#319331" opacity=".45"/><rect x="1028.0" y="200.12" width="1.0" height="1.300" fill="#0431fa" opacity=".45"/><rect x="1091.0" y="125.45" width="4.0" height="2" fill="#f01818"/><rect x="1043.0" y="129.47" width="7.0" height="2" fill="#f01818"/><rect x="1045.0" y="133.49" width="7.0" height="2" fill="#f01818"/><rect x="1028.0" y="137.51" width="6.0" height="2" fill="#f01818"/><rect x="1028.0" y="171.68" width="6.0" height="2" fill="#f01818"/><rect x="1028.0" y="185.75" width="6.0" height="2" fill="#f01818"/></svg>
<div class="a" style="left:1095.00px;top:115.00px;width:18.50px;height:499.00px;background:#e8e8e8;border-left:1px solid #dcdcdc;"></div>
<div class="a" style="left:1095.00px;top:614.00px;width:1.00px;height:495.00px;background:#f0f0f0;"></div>
<div class="a" style="left:1108.00px;top:173.80px;width:5.20px;height:11.20px;background:#e8585a;"></div>
<div class="a" style="left:1108.00px;top:198.00px;width:5.20px;height:10.80px;background:#e8585a;"></div>
<div class="a" style="left:1108.00px;top:221.30px;width:5.20px;height:11.20px;background:#e8585a;"></div>
<div class="a" style="left:1108.00px;top:245.00px;width:5.20px;height:11.20px;background:#e8585a;"></div>
<div class="a" style="left:1108.00px;top:316.20px;width:5.20px;height:12.10px;background:#e8585a;"></div>
<div class="a" style="left:1108.00px;top:447.00px;width:5.20px;height:11.70px;background:#e8585a;"></div>
<div class="a" style="left:1108.00px;top:530.30px;width:5.20px;height:11.70px;background:#e8585a;"></div>
<div class="a" style="left:1108.00px;top:590.00px;width:5.20px;height:11.50px;background:#e8585a;"></div>
<div class="a" style="left:1108.00px;top:328.30px;width:5.20px;height:11.70px;background:#1a85ff;"></div>
<div class="a" style="left:1096.00px;top:588.30px;width:17.00px;height:2.20px;background:#424242;"></div>
<div class="a" style="left:1113.00px;top:43.75px;width:1.00px;height:1068.25px;background:#e7e7e7;"></div>
<div class="a" style="left:1114.00px;top:43.75px;width:806.00px;height:43.75px;background:#f3f3f3;"></div>
<div class="a" style="left:1114.00px;top:43.75px;width:246.00px;height:44.25px;background:#ffffff;"></div>
<svg class="a" style="left:1132.50px;top:56.30px;" width="14.00" height="16.50" viewBox="0 0 13 16"><path d="M1.500 3.500h10M1.500 6.500h5M1.500 9.500h10M1.500 12.500h7" fill="none" stroke="#c4c4c4" stroke-width="1" /></svg>
<span class="t ls" style="left:1151.50px;top:59.15px;font-size:15.30px;color:#333333;letter-spacing:-0.062px;">Issue Details: SAST issue</span>
<svg class="a" style="left:1333.00px;top:56.00px;" width="20.00" height="20.00" viewBox="0 0 16 16"><path d="M8 8.707l3.646 3.647.708-.707L8.707 8l3.647-3.646-.707-.708L8 7.293 4.354 3.646l-.707.708L7.293 8l-3.646 3.646.707.708L8 8.707z" fill="#424242" /></svg>
<svg class="a" style="left:1849.30px;top:55.20px;" width="20.00" height="20.00" viewBox="0 0 16 16"><path d="M14 1H3L2 2v11l1 1h11l1-1V2l-1-1zM8 13H3V2h5v11zm6 0H9V2h5v11z" fill="#424242" /></svg>
<svg class="a" style="left:1881.50px;top:56.00px;" width="20.00" height="20.00" viewBox="0 0 16 16"><path d="M4 8a1 1 0 1 1-2 0 1 1 0 0 1 2 0zm5 0a1 1 0 1 1-2 0 1 1 0 0 1 2 0zm5 0a1 1 0 1 1-2 0 1 1 0 0 1 2 0z" fill="#424242" /></svg>
<svg class="a" style="left:1906.00px;top:97.00px;" width="9.00" height="5.00" viewBox="0 0 9 5"><path d="M0 5L4.500 0L9 5z" fill="#a8a8a8"/></svg>
<svg class="a" style="left:1906.00px;top:1099.00px;" width="9.00" height="5.00" viewBox="0 0 9 5"><path d="M0 0L4.500 5L9 0z" fill="#a8a8a8"/></svg>
<div class="a" style="left:1902.60px;top:780.60px;width:14.50px;height:177.40px;background:#c1c1c1;"></div>
<div class="a" style="left:1133.00px;top:107.30px;width:747.00px;height:883.20px;background:#ffffff;border:1px solid #d4d4d4;border-radius:6px;"></div>
<div class="a" style="left:1133.00px;top:1011.30px;width:747.00px;height:100.70px;background:#ffffff;border:1px solid #d4d4d4;border-bottom:none;border-radius:6px 6px 0 0;"></div>
<span class="t ls" style="left:1153.70px;top:149.15px;font-size:15.30px;color:#484848;font-weight:bold;letter-spacing:0.125px;">File:</span>
<span class="t ls" style="left:1189.20px;top:149.15px;font-size:15.30px;color:#555555;letter-spacing:0.575px;">orderHistory.ts</span>
<span class="t ls" style="left:1153.70px;top:188.15px;font-size:15.30px;color:#484848;font-weight:bold;letter-spacing:0.970px;">Match:</span>
<span class="t ls" style="left:1210.55px;top:188.15px;font-size:15.30px;color:#555555;letter-spacing:0.413px;">const order = await orders.find({ email: updatedEmail })</span>
<span class="t ls" style="left:1153.70px;top:1053.15px;font-size:15.30px;color:#484848;font-weight:bold;letter-spacing:0.125px;">File:</span>
<span class="t ls" style="left:1189.20px;top:1053.15px;font-size:15.30px;color:#555555;letter-spacing:0.575px;">orderHistory.ts</span>
<span class="t ls" style="left:1153.70px;top:1092.15px;font-size:15.30px;color:#484848;font-weight:bold;letter-spacing:0.970px;">Match:</span>
<span class="t ls" style="left:1210.55px;top:1092.15px;font-size:15.30px;color:#555555;letter-spacing:0.204px;">await orders.update({ _id: req.params.id }, { $set: { delivered: deliveryStatus, eta } })</span>
<svg class="a" style="left:1158.70px;top:235.00px;" width="15.40" height="8.30" viewBox="0 0 15.4 8.3"><path d="M0 0H15.400L7.700 8.300z" fill="#5a5a5a"/></svg>
<svg class="a" style="left:1158.70px;top:378.70px;" width="15.40" height="8.30" viewBox="0 0 15.4 8.3"><path d="M0 0H15.400L7.700 8.300z" fill="#5a5a5a"/></svg>
<span class="t ls" style="left:1185.70px;top:231.70px;font-size:17.20px;color:#484848;letter-spacing:0.630px;-webkit-text-stroke:.35px #484848;">Description</span>
<span class="t ls" style="left:1186.00px;top:374.70px;font-size:17.20px;color:#484848;letter-spacing:0.523px;-webkit-text-stroke:.35px #484848;">Recommendation</span>
<span class="t ls" style="left:1179.25px;top:277.15px;font-size:15.30px;color:#555555;letter-spacing:0.391px;">The vulnerability is a NoSQL injection caused by directly using user-influenced input (the</span>
<span class="t ls" style="left:1178.50px;top:300.15px;font-size:15.30px;color:#555555;letter-spacing:0.497px;">modified email) in a MongoDB query without sanitization, allowing attackers to inject</span>
<span class="t ls" style="left:1178.50px;top:322.15px;font-size:15.30px;color:#555555;letter-spacing:0.464px;">malicious query operators.</span>
<span class="t ls" style="left:1179.25px;top:420.15px;font-size:15.30px;color:#555555;letter-spacing:0.481px;">The fix introduces the use of the 'mongo-sanitize' library to sanitize the modified email before</span>
<span class="t ls" style="left:1178.50px;top:443.15px;font-size:15.30px;color:#555555;letter-spacing:0.490px;">using it in the MongoDB query, effectively removing any malicious query operators or</span>
<span class="t ls" style="left:1178.50px;top:466.15px;font-size:15.30px;color:#555555;letter-spacing:0.307px;">payloads. This prevents NoSQL injection by ensuring only safe, literal values are passed to the</span>
<span class="t ls" style="left:1179.00px;top:488.15px;font-size:15.30px;color:#555555;letter-spacing:0.416px;">database query. The rest of the code and logic remain unchanged, preserving original</span>
<span class="t ls" style="left:1179.25px;top:511.15px;font-size:15.30px;color:#555555;letter-spacing:0.742px;">functionality.</span>
<div class="a" style="left:1154.50px;top:559.40px;width:704.00px;height:409.60px;background:#ffffff;border:1px solid #d4d4d4;border-radius:5px;overflow:hidden;"></div>
<div class="a" style="left:1155.50px;top:560.40px;width:702.00px;height:50.00px;background:#ebebeb;border-bottom:1px solid #cfcfcf;border-radius:4px 4px 0 0;"></div>
<span class="t ls" style="left:1169.65px;top:577.70px;font-size:17.20px;color:#484848;letter-spacing:0.081px;-webkit-text-stroke:.35px #484848;">Suggested Changes</span>
<div class="a" style="left:1716.00px;top:570.00px;width:87.00px;height:29.00px;background:#0078d4;border-radius:3px;"></div>
<span class="t ls" style="left:1738.80px;top:576.80px;font-size:16.00px;color:#ffffff;letter-spacing:0.150px;">Apply</span>
<svg class="a" style="left:1817.80px;top:575.20px;" width="20.00" height="20.00" viewBox="0 0 16 16"><path d="M7.976 10.072l4.357-4.357.62.618L8.284 11h-.618L3 6.333l.619-.618 4.357 4.357z" fill="#424242" /></svg>
<div class="a" style="left:1235.00px;top:621.00px;width:1.00px;height:133.00px;background:#c8c8c8;"></div>
<span class="t lm" style="left:1193.84px;top:627.00px;font-size:14.60px;color:#237893;">5</span>
<div class="a" style="left:1236.00px;top:646.10px;width:621.50px;height:27.70px;background:#ffcccc;"></div>
<div class="a" style="left:1215.80px;top:658.95px;width:6.30px;height:2.00px;background:#b30000;"></div>
<span class="t lm" style="left:1193.84px;top:653.00px;font-size:14.60px;color:#237893;">6</span>
<div class="a" style="left:1251.20px;top:644.00px;width:606.30px;height:30px;overflow:hidden"><span class="t lm" style="left:0.00px;top:9.28px;font-size:16.04px;color:#4a4a4a;">import { type Request, type Response, type NextFunction } from 'express'</span></div>
<div class="a" style="left:1236.00px;top:673.80px;width:621.50px;height:27.50px;background:#e6f1cc;"></div>
<div class="a" style="left:1214.10px;top:686.95px;width:9.40px;height:2.00px;background:#4b7a00;"></div>
<div class="a" style="left:1217.80px;top:683.95px;width:2.00px;height:8.00px;background:#4b7a00;"></div>
<span class="t lm" style="left:1193.84px;top:681.00px;font-size:14.60px;color:#237893;">6</span>
<div class="a" style="left:1251.20px;top:672.00px;width:606.30px;height:30px;overflow:hidden"><span class="t lm" style="left:0.00px;top:9.28px;font-size:16.04px;color:#4a4a4a;">import { type Request, type Response, type NextFunction } from 'express'</span></div>
<div class="a" style="left:1236.00px;top:701.30px;width:621.50px;height:27.50px;background:#e6f1cc;"></div>
<div class="a" style="left:1214.10px;top:714.45px;width:9.40px;height:2.00px;background:#4b7a00;"></div>
<div class="a" style="left:1217.80px;top:711.45px;width:2.00px;height:8.00px;background:#4b7a00;"></div>
<span class="t lm" style="left:1193.84px;top:709.00px;font-size:14.60px;color:#237893;">7</span>
<div class="a" style="left:1251.20px;top:700.00px;width:606.30px;height:30px;overflow:hidden"><span class="t lm" style="left:0.00px;top:9.28px;font-size:16.04px;color:#4a4a4a;">const sanitize = require('mongo-sanitize')</span></div>
<span class="t lm" style="left:1193.84px;top:735.00px;font-size:14.60px;color:#237893;">8</span>
<div class="a" style="left:1165.00px;top:759.20px;width:692.50px;height:34.20px;background:#f3f3f3;border:1px solid #d0d0d0;border-right:none;border-radius:4px 0 0 4px;"></div>
<div class="a" style="left:1235.00px;top:799.00px;width:1.00px;height:139.00px;background:#c8c8c8;"></div>
<span class="t lm" style="left:1185.08px;top:806.00px;font-size:14.60px;color:#237893;">18</span>
<div class="a" style="left:1251.20px;top:797.00px;width:606.30px;height:30px;overflow:hidden"><span class="t lm" style="left:0.00px;top:9.28px;font-size:16.04px;color:#4a4a4a;">      const updatedEmail = email.replace(/[aeiou]/gi, '*')</span></div>
<div class="a" style="left:1236.00px;top:827.10px;width:621.50px;height:27.60px;background:#ffcccc;"></div>
<div class="a" style="left:1215.80px;top:839.90px;width:6.30px;height:2.00px;background:#b30000;"></div>
<span class="t lm" style="left:1185.08px;top:834.00px;font-size:14.60px;color:#237893;">19</span>
<div class="a" style="left:1251.20px;top:825.00px;width:606.30px;height:30px;overflow:hidden"><span class="t lm" style="left:0.00px;top:9.28px;font-size:16.04px;color:#4a4a4a;">      const order = await orders.find({ email: updatedEmail })</span></div>
<div class="a" style="left:1236.00px;top:854.70px;width:621.50px;height:27.50px;background:#e6f1cc;"></div>
<div class="a" style="left:1214.10px;top:867.85px;width:9.40px;height:2.00px;background:#4b7a00;"></div>
<div class="a" style="left:1217.80px;top:864.85px;width:2.00px;height:8.00px;background:#4b7a00;"></div>
<span class="t lm" style="left:1185.08px;top:862.00px;font-size:14.60px;color:#237893;">19</span>
<div class="a" style="left:1251.20px;top:853.00px;width:606.30px;height:30px;overflow:hidden"><span class="t lm" style="left:0.00px;top:9.28px;font-size:16.04px;color:#4a4a4a;">      const sanitizedEmail = sanitize(updatedEmail)</span></div>
<div class="a" style="left:1236.00px;top:882.20px;width:621.50px;height:27.50px;background:#e6f1cc;"></div>
<div class="a" style="left:1214.10px;top:895.35px;width:9.40px;height:2.00px;background:#4b7a00;"></div>
<div class="a" style="left:1217.80px;top:892.35px;width:2.00px;height:8.00px;background:#4b7a00;"></div>
<span class="t lm" style="left:1185.08px;top:889.00px;font-size:14.60px;color:#237893;">20</span>
<div class="a" style="left:1251.20px;top:880.00px;width:606.30px;height:30px;overflow:hidden"><span class="t lm" style="left:0.00px;top:9.28px;font-size:16.04px;color:#4a4a4a;">      const order = await orders.find({ email: sanitizedEmail })</span></div>
<span class="t lm" style="left:1185.08px;top:917.00px;font-size:14.60px;color:#237893;">21</span>
<div class="a" style="left:1251.20px;top:908.00px;width:606.30px;height:30px;overflow:hidden"><span class="t lm" style="left:0.00px;top:9.28px;font-size:16.04px;color:#4a4a4a;">      res.status(200).json({ status: 'success', data: order })</span></div>
<span class="t lm" style="left:1226.35px;top:772.03px;font-size:12.53px;color:#616161;font-style:italic;letter-spacing:0.020px;">10 lines skipped</span>
<div class="a" style="left:1175.80px;top:950.00px;width:578.00px;height:16.80px;background:#c1c1c1;"></div>
<svg class="a" style="left:1163.00px;top:954.00px;" width="5.50" height="9.00" viewBox="0 0 5.500 9"><path d="M5.500 0L0 4.500L5.500 9z" fill="#a8a8a8"/></svg>
<svg class="a" style="left:1844.00px;top:954.00px;" width="5.50" height="9.00" viewBox="0 0 5.500 9"><path d="M0 0L5.500 4.500L0 9z" fill="#a8a8a8"/></svg>
<div class="a" style="left:0;top:0;width:1920px;height:1112px;border:3px solid #444444;pointer-events:none"></div>
</body></html>
